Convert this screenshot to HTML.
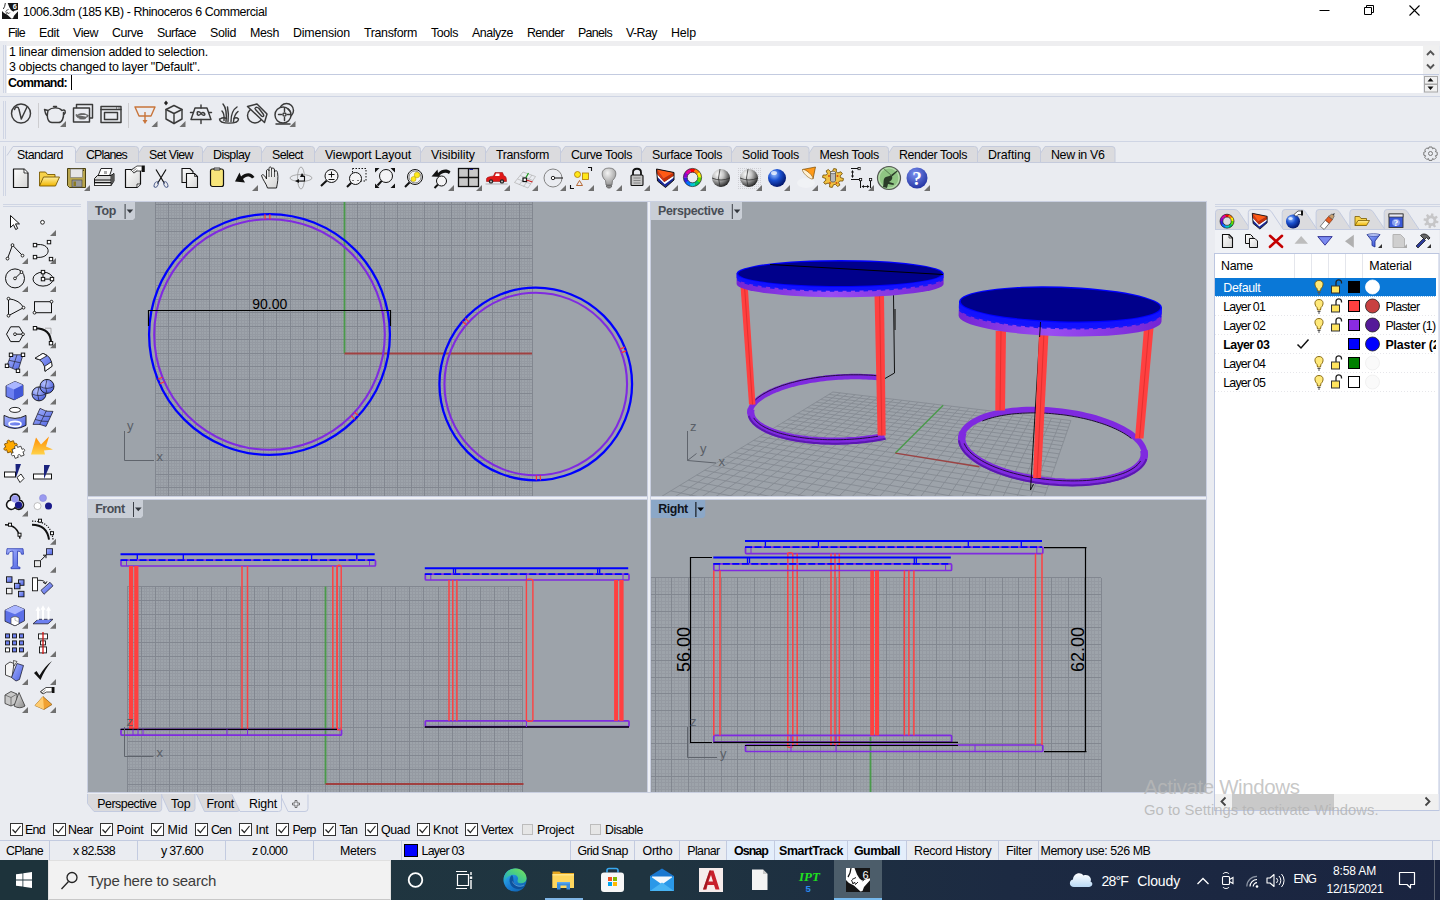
<!DOCTYPE html>
<html><head><meta charset="utf-8"><title>Rhinoceros 6</title>
<style>
*{box-sizing:border-box;margin:0;padding:0}
html,body{width:1440px;height:900px;overflow:hidden;background:#eaecf1;font-family:"Liberation Sans",sans-serif;font-size:12px;color:#000}
.a{position:absolute}
.t{position:absolute;white-space:nowrap;line-height:1}
svg{position:absolute;overflow:visible}
#title{left:0;top:0;width:1440px;height:22px;background:#fff}
#menu{left:0;top:22px;width:1440px;height:19px;background:#fff}
.mi{top:27px;font-size:12.3px}
</style></head><body>
<div class="a" id="title"></div><div class="a" id="menu"></div>
<svg style="left:2px;top:3px" width="16" height="16" viewBox="0 0 24 24"><rect x="0" y="0" width="24" height="24" fill="#161616"/><path d="M0 0H8.500L11 6.500L13.500 10.500L16 12.500L18.500 11.500L24 10.300V12.300L18 19L16.500 23L14.500 23.500L8 17.500L3 15L0 12Z" fill="#fff"/><path d="M5 0Q4.500 5.500 2 9" stroke="#161616" stroke-width="1.300" fill="none"/><path d="M6 11.500L10 9.500M5.500 12L7 16L8.500 14L9.500 16.500L12 14M16.500 13L18.500 11.500" stroke="#222" stroke-width="1" fill="none"/><text x="19" y="9.500" font-size="11" font-weight="bold" fill="#fff" text-anchor="middle" font-family="Liberation Sans,sans-serif">6</text></svg>
<span class="t" style="left:23.00px;top:5.50px;font-size:12.40px;letter-spacing:-0.400px;">1006.3dm (185 KB) - Rhinoceros 6 Commercial</span>
<svg style="left:1300px;top:0" width="140" height="22" viewBox="0 0 140 22">
<path d="M19.500 10.500h10" stroke="#000" stroke-width="1"/>
<path d="M64.500 7.500h7v7h-7z M66.500 7.500v-2h7v7h-2" stroke="#000" stroke-width="1" fill="none"/>
<path d="M109.500 5.500l10 10M119.500 5.500l-10 10" stroke="#000" stroke-width="1.100"/>
</svg>
<span class="t" style="left:8.00px;top:26.50px;font-size:12.40px;letter-spacing:-0.745px;">File</span>
<span class="t" style="left:39.00px;top:26.50px;font-size:12.40px;letter-spacing:-0.342px;">Edit</span>
<span class="t" style="left:73.00px;top:26.50px;font-size:12.40px;letter-spacing:-0.414px;">View</span>
<span class="t" style="left:112.00px;top:26.50px;font-size:12.40px;letter-spacing:-0.416px;">Curve</span>
<span class="t" style="left:157.00px;top:26.50px;font-size:12.40px;letter-spacing:-0.534px;">Surface</span>
<span class="t" style="left:210.00px;top:26.50px;font-size:12.40px;letter-spacing:-0.315px;">Solid</span>
<span class="t" style="left:250.00px;top:26.50px;font-size:12.40px;letter-spacing:-0.331px;">Mesh</span>
<span class="t" style="left:293.00px;top:26.50px;font-size:12.40px;letter-spacing:-0.176px;">Dimension</span>
<span class="t" style="left:364.00px;top:26.50px;font-size:12.40px;letter-spacing:-0.338px;">Transform</span>
<span class="t" style="left:431.00px;top:26.50px;font-size:12.40px;letter-spacing:-0.390px;">Tools</span>
<span class="t" style="left:472.00px;top:26.50px;font-size:12.40px;letter-spacing:-0.445px;">Analyze</span>
<span class="t" style="left:527.00px;top:26.50px;font-size:12.40px;letter-spacing:-0.612px;">Render</span>
<span class="t" style="left:578.00px;top:26.50px;font-size:12.40px;letter-spacing:-0.653px;">Panels</span>
<span class="t" style="left:626.00px;top:26.50px;font-size:12.40px;letter-spacing:-0.554px;">V-Ray</span>
<span class="t" style="left:671.00px;top:26.50px;font-size:12.40px;letter-spacing:-0.126px;">Help</span>
<div class="a" style="left:3px;top:45px;width:1px;height:48px;background:#cfd5e4"></div><div class="a" style="left:5px;top:45px;width:1px;height:48px;background:#cfd5e4"></div>
<div class="a" style="left:7px;top:41px;width:1433px;height:5px;background:#eeeef0"></div><div class="a" style="left:7px;top:45.500px;width:1416px;height:28.500px;background:#fff"></div>
<div class="a" style="left:7px;top:74px;width:1432px;height:1px;background:#c3cbe0"></div>
<div class="a" style="left:7px;top:75px;width:1416px;height:18px;background:#fff"></div>
<span class="t" style="left:9.00px;top:45.50px;font-size:12.40px;letter-spacing:-0.242px;">1 linear dimension added to selection.</span>
<span class="t" style="left:9.00px;top:60.50px;font-size:12.40px;letter-spacing:-0.236px;">3 objects changed to layer &quot;Default&quot;.</span>
<span class="t" style="left:8.00px;top:76.50px;font-size:12.40px;letter-spacing:-0.720px;font-weight:bold;">Command:</span>
<div class="a" style="left:71px;top:75px;width:1px;height:15px;background:#000"></div>
<svg style="left:1423px;top:45px" width="17" height="48" viewBox="0 0 17 48">
<rect x="0" y="0.500" width="16" height="28.500" fill="#f0f0f0"/>
<path d="M4 10l3.500-3.700 3.500 3.700M4 19.500l3.500 3.700 3.500-3.700" stroke="#555" stroke-width="1.900" fill="none"/>
<rect x="1.500" y="31.500" width="13" height="7.500" fill="#f0f0f0" stroke="#a8a8a8"/><rect x="1.500" y="39.500" width="13" height="7.500" fill="#f0f0f0" stroke="#a8a8a8"/>
<path d="M4.500 36.500l3-3.500 3 3.500zM4.500 41.500l3 3.500 3-3.500z" fill="#111"/>
</svg>
<div class="a" style="left:0;top:96px;width:1440px;height:1px;background:#cfd5e4"></div>
<div class="a" style="left:0;top:141px;width:1440px;height:1px;background:#cfd5e4"></div>
<div class="a" style="left:3px;top:101px;width:1px;height:38px;background:#cfd5e4"></div>
<div class="a" style="left:3px;top:146px;width:1px;height:50px;background:#cfd5e4"></div>
<div class="a" style="left:5px;top:101px;width:1px;height:38px;background:#cfd5e4"></div>
<div class="a" style="left:5px;top:146px;width:1px;height:50px;background:#cfd5e4"></div>
<div class="a" style="left:38px;top:103px;width:1px;height:25px;background:#cdcdd0"></div>
<div class="a" style="left:128px;top:103px;width:1px;height:25px;background:#cdcdd0"></div>
<svg style="left:0;top:0" width="1440" height="200" viewBox="0 0 1440 200"><path d="M7 162.500H1440" stroke="#c5cbdc" fill="none"/><path d="M1034.5 162.500L1045.0 146.500H1112.0Q1115.0 146.500 1115.0 149.500V162.500Z" fill="#dbdbde" stroke="#c5cbdc"/><path d="M971.5 162.500L982.0 146.500H1037.5Q1040.5 146.500 1040.5 149.500V162.500Z" fill="#dbdbde" stroke="#c5cbdc"/><path d="M882.5 162.500L893.0 146.500H974.5Q977.5 146.500 977.5 149.500V162.500Z" fill="#dbdbde" stroke="#c5cbdc"/><path d="M803.0 162.500L813.5 146.500H885.5Q888.5 146.500 888.5 149.500V162.500Z" fill="#dbdbde" stroke="#c5cbdc"/><path d="M725.5 162.500L736.0 146.500H806.0Q809.0 146.500 809.0 149.500V162.500Z" fill="#dbdbde" stroke="#c5cbdc"/><path d="M635.5 162.500L646.0 146.500H728.5Q731.5 146.500 731.5 149.500V162.500Z" fill="#dbdbde" stroke="#c5cbdc"/><path d="M554.5 162.500L565.0 146.500H638.5Q641.5 146.500 641.5 149.500V162.500Z" fill="#dbdbde" stroke="#c5cbdc"/><path d="M479.5 162.500L490.0 146.500H557.5Q560.5 146.500 560.5 149.500V162.500Z" fill="#dbdbde" stroke="#c5cbdc"/><path d="M414.5 162.500L425.0 146.500H482.5Q485.5 146.500 485.5 149.500V162.500Z" fill="#dbdbde" stroke="#c5cbdc"/><path d="M308.5 162.500L319.0 146.500H417.5Q420.5 146.500 420.5 149.500V162.500Z" fill="#dbdbde" stroke="#c5cbdc"/><path d="M255.5 162.500L266.0 146.500H311.5Q314.5 146.500 314.5 149.500V162.500Z" fill="#dbdbde" stroke="#c5cbdc"/><path d="M196.5 162.500L207.0 146.500H258.5Q261.5 146.500 261.5 149.500V162.500Z" fill="#dbdbde" stroke="#c5cbdc"/><path d="M132.5 162.500L143.0 146.500H199.5Q202.5 146.500 202.5 149.500V162.500Z" fill="#dbdbde" stroke="#c5cbdc"/><path d="M69.5 162.500L80.0 146.500H135.5Q138.5 146.500 138.5 149.500V162.500Z" fill="#dbdbde" stroke="#c5cbdc"/><path d="M7 162.500V155.500L13 146.500H72.500Q75.500 146.500 75.500 149.500V163.500H7Z" fill="#eaecf1" stroke="none"/><path d="M7 155.500L13 146.500H72.500Q75.500 146.500 75.500 149.500V162.500" fill="none" stroke="#c5cbdc"/><g transform="translate(1430.500 153.500)" fill="none" stroke="#777" stroke-width="1"><circle r="2"/><path d="M-1.500 -6.500h3l.5 1.800 1.700 -.9 2.100 2.100 -.9 1.700 1.800 .5v3l-1.800 .5 .9 1.700 -2.100 2.100 -1.700 -.9 -.5 1.800h-3l-.5 -1.800 -1.700 .9 -2.100 -2.100 .9 -1.700 -1.800 -.5v-3l1.800 -.5 -.9 -1.700 2.100 -2.100 1.700 .9z"/></g></svg>
<span class="t" style="left:17.00px;top:148.50px;font-size:12.40px;letter-spacing:-0.541px;">Standard</span>
<span class="t" style="left:86.00px;top:148.50px;font-size:12.40px;letter-spacing:-0.839px;">CPlanes</span>
<span class="t" style="left:149.00px;top:148.50px;font-size:12.40px;letter-spacing:-0.589px;">Set View</span>
<span class="t" style="left:213.00px;top:148.50px;font-size:12.40px;letter-spacing:-0.523px;">Display</span>
<span class="t" style="left:272.00px;top:148.50px;font-size:12.40px;letter-spacing:-0.577px;">Select</span>
<span class="t" style="left:325.00px;top:148.50px;font-size:12.40px;letter-spacing:-0.180px;">Viewport Layout</span>
<span class="t" style="left:431.00px;top:148.50px;font-size:12.40px;letter-spacing:-0.056px;">Visibility</span>
<span class="t" style="left:496.00px;top:148.50px;font-size:12.40px;letter-spacing:-0.338px;">Transform</span>
<span class="t" style="left:571.00px;top:148.50px;font-size:12.40px;letter-spacing:-0.386px;">Curve Tools</span>
<span class="t" style="left:652.00px;top:148.50px;font-size:12.40px;letter-spacing:-0.377px;">Surface Tools</span>
<span class="t" style="left:742.00px;top:148.50px;font-size:12.40px;letter-spacing:-0.249px;">Solid Tools</span>
<span class="t" style="left:819.50px;top:148.50px;font-size:12.40px;letter-spacing:-0.299px;">Mesh Tools</span>
<span class="t" style="left:899.00px;top:148.50px;font-size:12.40px;letter-spacing:-0.403px;">Render Tools</span>
<span class="t" style="left:988.00px;top:148.50px;font-size:12.40px;letter-spacing:-0.115px;">Drafting</span>
<span class="t" style="left:1051.00px;top:148.50px;font-size:12.40px;letter-spacing:-0.335px;">New in V6</span>
<svg style="left:0;top:0" width="1440" height="200" viewBox="0 0 1440 200"><defs>
<linearGradient id="dg" x1="0" y1="0" x2="1" y2="1"><stop offset="0" stop-color="#ffffff"/><stop offset="1" stop-color="#d4d4d4"/></linearGradient>
<linearGradient id="fy" x1="0" y1="0" x2="0" y2="1"><stop offset="0" stop-color="#fff0a0"/><stop offset="1" stop-color="#f0b400"/></linearGradient>
<radialGradient id="sg" cx=".35" cy=".3" r=".75"><stop offset="0" stop-color="#ffffff"/><stop offset=".4" stop-color="#c4c4c4"/><stop offset=".8" stop-color="#555"/><stop offset="1" stop-color="#1a1a1a"/></radialGradient>
<radialGradient id="sb" cx=".35" cy=".3" r=".75"><stop offset="0" stop-color="#9ac0ff"/><stop offset=".45" stop-color="#1a50d0"/><stop offset="1" stop-color="#001060"/></radialGradient>
<radialGradient id="hb" cx=".4" cy=".3" r=".8"><stop offset="0" stop-color="#7a90f0"/><stop offset="1" stop-color="#1a2a9a"/></radialGradient>
<radialGradient id="bg_" cx=".4" cy=".3" r=".8"><stop offset="0" stop-color="#f4f4f4"/><stop offset="1" stop-color="#8c8c8c"/></radialGradient>
<pattern id="dots" patternUnits="userSpaceOnUse" width="2" height="2"><rect width="1" height="1" fill="#cfcfd4"/></pattern>
</defs><g transform="translate(21 113.5)"><circle r="9.500" stroke="#3a3a3a" stroke-width="1.450" fill="none" stroke-linejoin="round" stroke-linecap="round" stroke-width="1.700"/><path d="M-6.500 -4C-5.500 -7.500 -2.500 -7 -2 -4L0.300 5.500L6 -6.500" stroke="#3a3a3a" stroke-width="1.450" fill="none" stroke-linejoin="round" stroke-linecap="round" stroke-width="1.700"/><path d="M-1.500 -7h3" stroke="#eaecf1" stroke-width="1" fill="none"/></g><g transform="translate(55 114)"><path d="M-7 -3.500C-9 5 -6 8.500 -3 8.500H3.500C7 8.500 9 4 8.500 -1.500M-7 -3.500C-3 -7 4 -7 7 -3.500C10 -5.500 11.500 -2 9 0.500M-7 -3.500L-10.500 -4.500C-10 -1 -9 1 -7.500 2.500M-1.500 -7.500h3" stroke="#3a3a3a" stroke-width="1.450" fill="none" stroke-linejoin="round" stroke-linecap="round"/></g><path d="M66 121v6h-6z" fill="#707070"/><g transform="translate(83 113.5)"><path d="M-6.500 -6V-9H9.500V4.500H6.500" stroke="#3a3a3a" stroke-width="1.450" fill="none" stroke-linejoin="round" stroke-linecap="round"/><rect x="-9.500" y="-5.500" width="16" height="14" stroke="#3a3a3a" stroke-width="1.450" fill="none" stroke-linejoin="round" stroke-linecap="round"/><path d="M-5.500 1.500C-5 5 -3.500 5.500 -2.500 5.500H1C3 5.500 4 3.500 4 1.500C5.500 1 6 2.500 4.500 3.500M-5.500 1.500L-7 1C-7 2.500 -6 3.500 -5.500 4ZM-5.500 1.500C-3 -0.500 2 -0.500 4 1.500" fill="#666" stroke="#666" stroke-width=".8"/></g><g transform="translate(111 114)"><rect x="-10" y="-7.500" width="20" height="16" stroke="#3a3a3a" stroke-width="1.450" fill="none" stroke-linejoin="round" stroke-linecap="round"/><path d="M-10 -4.500H10" stroke="#3a3a3a" stroke-width="1.450" fill="none" stroke-linejoin="round" stroke-linecap="round"/><rect x="-6.500" y="-1.500" width="13" height="7" stroke="#3a3a3a" stroke-width="1.450" fill="none" stroke-linejoin="round" stroke-linecap="round" stroke-width="1.100"/><path d="M5 -6h1M7.500 -6h1" stroke="#333" stroke-width="1"/></g><g transform="translate(145 114.5)"><path d="M-10 -7.500H10L6 1.500H-6Z" stroke="#c8743a" stroke-width="1.400" fill="none" stroke-linejoin="round"/><path d="M0 -2.500V6.500" stroke="#c8743a" stroke-width="1.400" fill="none" stroke-linejoin="round"/><path d="M-2.500 5.500H2.500L0 9.500Z" fill="#c8743a"/></g><path d="M157.5 121v6h-6z" fill="#707070"/><g transform="translate(174 114.5)"><path d="M-8 -5L0 -9L8 -5V4.500L0 9L-8 4.500Z" stroke="#3a3a3a" stroke-width="1.450" fill="none" stroke-linejoin="round" stroke-linecap="round"/><path d="M-8 -5L0 -1L8 -5M0 -1V9" stroke="#3a3a3a" stroke-width="1.450" fill="none" stroke-linejoin="round" stroke-linecap="round"/><path d="M-10 -11.500l2-2.500 2 2.500-2 2.500z" fill="#222"/></g><path d="M185.5 121v6h-6z" fill="#707070"/><g transform="translate(201 114.5)"><path d="M-6 -6.500H6L10 5H-10Z" stroke="#3a3a3a" stroke-width="1.450" fill="none" stroke-linejoin="round" stroke-linecap="round"/><path d="M0 -9.500V-6.500M0 5V9M-10.500 -2H-8M8 -2H10.500" stroke="#3a3a3a" stroke-width="1.450" fill="none" stroke-linejoin="round" stroke-linecap="round"/><path d="M-3.500 -1C-5 -3 -1.500 -3.500 0 -1C1.500 1.500 5 1 3.500 -1C2 -3 0 -1 0 -1C-1.500 1.500 -4.500 1 -3.500 -1Z" stroke="#3a3a3a" stroke-width="1.450" fill="none" stroke-linejoin="round" stroke-linecap="round" stroke-width="1"/></g><g transform="translate(229 114.5)"><path d="M-9.500 4.500C-9.500 10 9.500 10 9.500 4.500M-9 4.500C-6 2.500 -4 3 -2.500 4M5 4C6.500 3 8 3 9.500 4.500" stroke="#3a3a3a" stroke-width="1.450" fill="none" stroke-linejoin="round" stroke-linecap="round" stroke-width="1.100"/><path d="M-3 7C-2 -2 -3 -7 -6 -10.500M-1 7C0 0 -1 -5 -1.500 -7.500M2 7C2 0 4 -5 8 -7.500M4.500 7C5 2 6.500 -1 9 -3M-5 6C-4.500 1 -5.500 -2 -7 -3.500" stroke="#3a3a3a" stroke-width="1.450" fill="none" stroke-linejoin="round" stroke-linecap="round" stroke-width="1.100"/></g><g transform="translate(257 113.5)"><circle cx="-2" cy="2" r="7.500" stroke="#3a3a3a" stroke-width="1.450" fill="none" stroke-linejoin="round" stroke-linecap="round" stroke-width="1.100"/><path d="M-9.500 -7L0 -9.500L10 0.500L7.500 9Z" fill="#eaecf1" stroke="#3a3a3a" stroke-width="1.450" fill="none" stroke-linejoin="round" stroke-linecap="round"/><path d="M-2 -5C-1 -7 1 -6 2 -5L6.500 1C7.500 3 5.500 3.500 4.500 2.500L-1.500 -4" stroke="#3a3a3a" stroke-width="1.450" fill="none" stroke-linejoin="round" stroke-linecap="round" stroke-width="1"/></g><g transform="translate(284 114)"><circle cx="2.500" cy="-3.500" r="7" stroke="#3a3a3a" stroke-width="1.450" fill="none" stroke-linejoin="round" stroke-linecap="round" stroke-width=".9" stroke="#666"/><circle cx="-1" cy="1" r="8" fill="#eaecf1" stroke="#3a3a3a" stroke-width="1.450" fill="none" stroke-linejoin="round" stroke-linecap="round" stroke-width="1.100"/><circle cx="0.500" cy="0.500" r="1.600" stroke="#3a3a3a" stroke-width="1.450" fill="none" stroke-linejoin="round" stroke-linecap="round"/><path d="M0.500 -5.500V-2.500M0.500 3.500V6.500M-5.500 0.500H-2.500M3.500 0.500H6.500M-8 10H6" stroke="#3a3a3a" stroke-width="1.450" fill="none" stroke-linejoin="round" stroke-linecap="round" stroke-width="1.100"/><path d="M4 -5l2 2" stroke="#3a3a3a" stroke-width="1.450" fill="none" stroke-linejoin="round" stroke-linecap="round" stroke-width="1"/></g><path d="M295.5 121v6h-6z" fill="#707070"/><g transform="translate(20.5 178)"><path d="M-7 -9H3.500L7.500 -5V9.500H-7Z" fill="url(#dg)" stroke="#111" stroke-width="1.200" stroke-linejoin="round"/><path d="M3.500 -9V-5H7.500" fill="#fff" stroke="#111" stroke-width=".8"/></g><g transform="translate(49 178)"><path d="M-9.500 8V-6H-3.500L-1.500 -3.500H6V-1" fill="#f7d24a" stroke="#7a5a00" stroke-width=".9"/><path d="M-9.500 8L-5.500 -1H10.500L6.500 8Z" fill="url(#fy)" stroke="#7a5a00" stroke-width=".9" stroke-linejoin="round"/></g><g transform="translate(76.5 178)"><path d="M-9 -9.500H9V9.500H-7L-9 7.500Z" fill="#b9a64e" stroke="#4a4010" stroke-width="1"/><rect x="-6" y="-9" width="12" height="8.500" fill="#e6e6e6" stroke="#777" stroke-width=".6"/><rect x="-4.500" y="2" width="10" height="7" fill="#9a9a9a" stroke="#444" stroke-width=".6"/><rect x="-3" y="3.500" width="2.500" height="4.500" fill="#8a7a20"/><rect x="6.500" y="-8.500" width="1" height="1.500" fill="#4a4010"/></g><path d="M90 185v6h-6z" fill="#707070"/><g transform="translate(104 178)"><path d="M-6 -2L-3 -9.500H8L5.500 -2Z" fill="#fff" stroke="#111" stroke-width=".9"/><rect x="0" y="-7" width="3" height="3" fill="#aaa"/><path d="M-9.500 0.500L-6.500 -2.500H7L10 -4.500V3L7 7.500H-9.500Z" fill="#d8d8d8" stroke="#111" stroke-width="1"/><path d="M7 -2.500V7.500M10 -4.500L7 -2.500" stroke="#111" stroke-width=".8" fill="none"/><path d="M7 -2L10 -4.500V3L7 7.500Z" fill="#555"/><path d="M-9.500 2H7M-9.500 4.500H7" stroke="#111" stroke-width="1.100"/><rect x="-9.500" y="5" width="16.500" height="2.500" fill="#fff" stroke="#111" stroke-width=".7"/></g><g transform="translate(134 178)"><path d="M-8.500 -8.500H6.500V6L3 9.500H-8.500Z" fill="url(#dg)" stroke="#111" stroke-width="1.200" stroke-linejoin="round"/><path d="M3 9.500V6H6.500" fill="#fff" stroke="#111" stroke-width=".8"/><path d="M-3 -8L3 -12H8V-7H3L0 -5Z" fill="#fff" stroke="#222" stroke-width=".8"/><rect x="8" y="-12.500" width="2.800" height="6.500" fill="#111"/><path d="M-3.500 -7l4.500-3.500M-2 -6l4.500-3.500M-.5 -5l4-3" stroke="#555" stroke-width=".7"/></g><g transform="translate(161 178)"><path d="M-5 -8.500L3.500 5.500M5 -8.500L-3.500 5.500" stroke="#111" stroke-width="1.200"/><ellipse cx="-4.800" cy="6.500" rx="1.800" ry="3" transform="rotate(28 -4.800 6.500)" fill="none" stroke="#4a5a8a" stroke-width=".9"/><ellipse cx="4.800" cy="6.500" rx="1.800" ry="3" transform="rotate(-28 4.800 6.500)" fill="none" stroke="#4a5a8a" stroke-width=".9"/></g><g transform="translate(189.5 178)"><path d="M-7.500 -9.500H0.500L3.500 -6.500V4.500H-7.500Z" fill="url(#dg)" stroke="#111" stroke-width="1.100"/><path d="M-3 -4.500H5L8 -1.500V9.500H-3Z" fill="url(#dg)" stroke="#111" stroke-width="1.100"/><path d="M5 -4.500V-1.500H8" fill="none" stroke="#111" stroke-width=".7"/></g><g transform="translate(217 177.5)"><rect x="-6.500" y="-8.500" width="13" height="17.500" rx="2" fill="#f7e57a" stroke="#111" stroke-width="1.200"/><path d="M-3 -9.500H3V-7.500H-3Z" fill="#ddd" stroke="#111" stroke-width=".8"/></g><g transform="translate(245 178)"><path d="M-10 3.500L-5.500 -5.500L-4 -1.500C1 -6 6.500 -6 9.500 -1L7 0.500C4 -2.500 1 -2 -2 1L0 4.500Z" fill="#111"/></g><path d="M258 185v6h-6z" fill="#707070"/><g transform="translate(271 178)"><path d="M-3.500 10C-4.500 6 -8.500 1.500 -9.500 -2.500C-8.500 -4.500 -6 -2.500 -4.500 1V-7C-4.500 -9 -2 -9 -2 -7V-9.500C-2 -11.500 0.500 -11.500 0.500 -9.500V-8.500C0.500 -10.500 3.500 -10.500 3.500 -8V-6C4 -8 6.500 -7.500 6.500 -5.500C7.500 0 6.500 5 5.500 10Z" fill="url(#dg)" stroke="#111" stroke-width=".9" stroke-linejoin="round"/><path d="M-2 -7V-1M0.500 -8.500V-1M3.500 -7V-1" stroke="#111" stroke-width=".7"/></g><g transform="translate(301 178)"><ellipse rx="11" ry="3.500" fill="none" stroke="#999" stroke-width=".8"/><ellipse rx="3.500" ry="11" fill="none" stroke="#999" stroke-width=".8"/><path d="M-6 3L-2 1V5Z M1 -5L3.500 -1H-1Z" fill="#111"/><path d="M-3 3H3.500V-2" stroke="#111" stroke-width="1.100" fill="none"/></g><path d="M326.8 180.5L321 186" stroke="#111" stroke-width="2"/><circle cx="331.5" cy="176" r="6.5" fill="#f4f4f6" stroke="#111" stroke-width="1"/><path d="M328.500 174.500h6M331.500 171.500v6M328.500 179.500h6" stroke="#111" stroke-width="1"/><rect x="352.500" y="168.500" width="13.500" height="12.500" fill="none" stroke="#111" stroke-width="1" stroke-dasharray="1.500 1.500"/><path d="M351.3 182.7L347 187" stroke="#111" stroke-width="2"/><circle cx="355.5" cy="178.5" r="6" fill="#f4f4f6" stroke="#111" stroke-width="1"/><path d="M352 180.500h2M357 180.500h2" stroke="#555" stroke-width=".8"/><path d="M375 168h4.500l-4.500 4.500zM395 168h-4.500l4.500 4.500zM375 188h4.500l-4.500-4.500zM395 188h-4.500l4.500-4.500z" fill="#111"/><path d="M381.7 180.8L377.5 185.5" stroke="#111" stroke-width="2"/><circle cx="386" cy="176" r="6.5" fill="#f4f4f6" stroke="#111" stroke-width="1"/><path d="M409.7 182.3L405 187" stroke="#111" stroke-width="2"/><circle cx="415" cy="177" r="7.5" fill="#f4f4f6" stroke="#111" stroke-width="1"/><circle cx="415" cy="177" r="6" fill="none" stroke="#555" stroke-width=".7"/><circle cx="417" cy="175" r="2.800" fill="#ffe81a" stroke="#b09a00" stroke-width=".5"/><circle cx="413.500" cy="179" r="2.500" fill="#ffe81a" stroke="#b09a00" stroke-width=".5"/><path d="M431.500 176.500L437.500 169.500L438 173C442 169 447 168.500 450.500 171.500L449 174C446 172 442.500 172.500 439.500 175.500L442 177Z" fill="#111"/><path d="M438.0 184.5L434.5 188" stroke="#111" stroke-width="2"/><circle cx="441.5" cy="181" r="5" fill="#f4f4f6" stroke="#111" stroke-width="1"/><path d="M454 185v6h-6z" fill="#707070"/><rect x="458.500" y="168.500" width="20" height="18" fill="#c9c9c9" stroke="#111" stroke-width="1.300"/><path d="M468.500 168.500V186.500M458.500 177.500H478.500" stroke="#111" stroke-width="1.300"/><rect x="469.500" y="169" width="3.500" height="1" fill="#1a1a9a"/><path d="M482 185v6h-6z" fill="#707070"/><g transform="translate(496.5 178)"><path d="M-10 3.500V1C-10 -1 -6 -1.500 -3 -2L-1.500 -5.500H6L7.500 -2C9.500 -2 10 0 10 3.500Z" fill="#e01818" stroke="#8a0000" stroke-width=".5"/><path d="M-0.500 -4.500H3V-2H-1.500Z" fill="#fff"/><circle cx="-5.500" cy="3.500" r="2.200" fill="#222"/><circle cx="5.500" cy="3.500" r="2.200" fill="#222"/><circle cx="-5.500" cy="3.500" r=".9" fill="#ccc"/><circle cx="5.500" cy="3.500" r=".9" fill="#ccc"/><path d="M-11 6H11" stroke="#999" stroke-width=".7"/></g><path d="M510 185v6h-6z" fill="#707070"/><g transform="translate(525 180)"><path d="M-10.500 2.500L-2 -8L10.500 -3.500L3 8Z M-7.500 -1L6 4M-5 -4.500L8 0.500M-6 5L3 -6M-1.500 6.500L7 -5" fill="none" stroke="#b0b0b0" stroke-width=".7"/><rect x="-2" y="-2" width="3.500" height="3.500" fill="#fff" stroke="#111" stroke-width="1.200"/><path d="M1.500 0L7.500 2" stroke="#d02020" stroke-width="1.200"/><path d="M1 -2.500L3.500 -7" stroke="#20a020" stroke-width="1.200"/></g><path d="M538 185v6h-6z" fill="#707070"/><g transform="translate(553 178)"><circle r="9" fill="none" stroke="#777" stroke-width=".9"/><path d="M0 0H10" stroke="#111" stroke-width="1"/><circle r="1.700" fill="#fff" stroke="#111" stroke-width=".9"/></g><path d="M566 185v6h-6z" fill="#707070"/><circle cx="577.500" cy="174.500" r="3" fill="#ffe81a" stroke="#b07800" stroke-width=".8"/><rect x="582.500" y="173" width="6" height="6.500" fill="#ffe81a" stroke="#b07800" stroke-width=".8"/><path d="M576.500 185.500L579.500 180.500L582.500 185.500Z" fill="none" stroke="#b05a20" stroke-width=".9"/><path d="M570.500 185v3.500h3.500M588 167.500h3.500v3.500" fill="none" stroke="#111" stroke-width="1.100"/><path d="M594 185v6h-6z" fill="#707070"/><g transform="translate(609 178)"><path d="M0 -10C-9 -10 -8 -1 -3.500 2.500L-3 7H3L3.500 2.500C8 -1 9 -10 0 -10Z" fill="url(#bg_)" stroke="#666" stroke-width=".7"/><path d="M-2.500 7.500H2.500V9C1 10.500 -1 10.500 -2.500 9Z" fill="#888" stroke="#444" stroke-width=".6"/></g><path d="M622 185v6h-6z" fill="#707070"/><g transform="translate(637 178)"><path d="M-4 -3V-5.500C-4 -10.500 4 -10.500 4 -5.500V-3" fill="none" stroke="#111" stroke-width="1.800"/><rect x="-6" y="-3" width="12" height="10.500" rx="1" fill="#c4c4c4" stroke="#111" stroke-width="1.100"/><path d="M-3.500 0H3.500M-3.500 2.500H3.500M-3.500 5H3.500" stroke="#777" stroke-width=".8"/></g><path d="M650 185v6h-6z" fill="#707070"/><g transform="translate(665 178) scale(1)"><path d="M-8.500 -9L9 -5.500V2L0.500 9.500L-7.500 3Z" fill="#1a2a9a"/><path d="M-8.100 -4.200L-0.700 4.100L9 -2.500V-0.600L-0.200 6.350L-7.850 -1.200Z" fill="#fff"/><path d="M-8.500 -9L-1.500 0.500L-0.700 4.100L-8.100 -4.200Z" fill="#e03a08"/><path d="M-1.500 0.500L9 -5.500V-2.500L-0.700 4.100Z" fill="#c83000"/><path d="M-8.500 -9L9 -5.500L-1.500 0.500Z" fill="#ff5a14"/><path d="M-8.500 -9L9 -5.500V2L0.500 9.500L-7.500 3Z" fill="none" stroke="#111" stroke-width="1"/></g><path d="M678 185v6h-6z" fill="#707070"/><path d="M690.14 170.70A7.2 7.2 0 0 1 694.86 170.70" stroke="#ff0000" stroke-width="3.8" fill="none"/><path d="M694.59 170.61A7.2 7.2 0 0 1 698.41 173.39" stroke="#ff8000" stroke-width="3.8" fill="none"/><path d="M698.24 173.15A7.2 7.2 0 0 1 699.70 177.64" stroke="#ffee00" stroke-width="3.8" fill="none"/><path d="M699.70 177.36A7.2 7.2 0 0 1 698.24 181.85" stroke="#60e000" stroke-width="3.8" fill="none"/><path d="M698.41 181.61A7.2 7.2 0 0 1 694.59 184.39" stroke="#00c060" stroke-width="3.8" fill="none"/><path d="M694.86 184.30A7.2 7.2 0 0 1 690.14 184.30" stroke="#00c8d0" stroke-width="3.8" fill="none"/><path d="M690.41 184.39A7.2 7.2 0 0 1 686.59 181.61" stroke="#0070ff" stroke-width="3.8" fill="none"/><path d="M686.76 181.85A7.2 7.2 0 0 1 685.30 177.36" stroke="#3020e0" stroke-width="3.8" fill="none"/><path d="M685.30 177.64A7.2 7.2 0 0 1 686.76 173.15" stroke="#9000d0" stroke-width="3.8" fill="none"/><path d="M686.59 173.39A7.2 7.2 0 0 1 690.41 170.61" stroke="#e000a0" stroke-width="3.8" fill="none"/><circle cx="692.5" cy="177.5" r="9.1" fill="none" stroke="#222" stroke-width=".7"/><circle cx="692.5" cy="177.5" r="5.3" fill="none" stroke="#222" stroke-width=".7"/><path d="M706 185v6h-6z" fill="#707070"/><circle cx="721" cy="178" r="9" fill="url(#sg)"/><path d="M712 178Q721 182 730 178M720 169Q717 178 720 187" stroke="#333" stroke-width=".8" fill="none"/><rect x="738" y="167" width="23" height="22" fill="url(#dots)"/><circle cx="749" cy="178" r="9" fill="url(#sg)"/><path d="M740 178Q749 182 758 178M748 169Q745 178 748 187" stroke="#333" stroke-width=".8" fill="none"/><path d="M762 185v6h-6z" fill="#707070"/><circle cx="777" cy="178" r="9" fill="url(#sb)"/><ellipse cx="774" cy="173" rx="3" ry="2" fill="#fff" opacity=".7"/><path d="M790 185v6h-6z" fill="#707070"/><ellipse cx="806" cy="183" rx="9" ry="5" fill="#fff" opacity=".3"/><path d="M802.500 169.500L815.500 167L813 179Z" fill="#ff9a1a" stroke="#7a4a00" stroke-width=".7"/><ellipse cx="807.700" cy="174.200" rx="2" ry="6.800" transform="rotate(-48 807.700 174.200)" fill="#fff0d0" stroke="#7a4a00" stroke-width=".5"/><path d="M818 185v6h-6z" fill="#707070"/><path d="M843.5 178.6 L842.9 181.0 L839.7 181.0 L838.6 182.4 L839.9 185.1 L837.7 186.5 L835.4 184.4 L833.5 184.7 L832.3 187.4 L829.6 187.0 L829.7 184.1 L828.1 183.1 L825.1 184.2 L823.6 182.2 L825.9 180.2 L825.5 178.4 L822.5 177.4 L823.1 175.0 L826.3 175.0 L827.4 173.6 L826.1 170.9 L828.3 169.5 L830.6 171.6 L832.5 171.3 L833.7 168.6 L836.4 169.0 L836.3 171.9 L837.9 172.9 L840.9 171.8 L842.4 173.8 L840.1 175.8 L840.5 177.6 Z" fill="#f2c040" stroke="#6a4a00" stroke-width=".8"/><circle cx="829" cy="176" r="1" fill="#d05010"/><circle cx="837.500" cy="176" r="1" fill="#d05010"/><circle cx="830" cy="183" r="1" fill="#d05010"/><circle cx="836.500" cy="183" r="1" fill="#d05010"/><path d="M830.500 172.500V180.500C830.500 182.500 835.500 182.500 835.500 180.500V172.500Z" fill="#b8b8b8" stroke="#444" stroke-width=".7"/><ellipse cx="833" cy="172.500" rx="2.500" ry="1.200" fill="#e8e8e8" stroke="#444" stroke-width=".6"/><path d="M846 185v6h-6z" fill="#707070"/><path d="M851 168.500H858M851 179.500H859M860.500 180.500V188M870.500 180.500V188" stroke="#111" stroke-width="1" fill="none"/><path d="M852.500 171V177M862.500 186.500H868.500" stroke="#111" stroke-width=".9"/><path d="M852.500 170l-1.500 2.500h3zM852.500 178l-1.500-2.500h3zM861.500 186.500l2.500-1.500v3zM869.500 186.500l-2.500-1.500v3z" fill="#111"/><rect x="858" y="167.500" width="2.200" height="2.200" fill="#fff" stroke="#111" stroke-width=".8"/><rect x="859.500" y="178.500" width="2.200" height="2.200" fill="#fff" stroke="#111" stroke-width=".8"/><rect x="869.500" y="178.500" width="2.200" height="2.200" fill="#fff" stroke="#111" stroke-width=".8"/><path d="M874 185v6h-6z" fill="#707070"/><g transform="translate(889 178)"><circle r="11.500" fill="#8fc583" stroke="#555" stroke-width="1.200"/><circle r="10" fill="none" stroke="#b8dcae" stroke-width="1.200"/><path d="M-6 9C-5 5 -6 2 -4.500 0C-3 -2 0 -1 2 -3L8 -7.500L8.500 -6.500L3 -1.500C4 1 2 3 0 4L5 5.500L4.500 7L-1 6L-2 10Z" fill="#2a3a28"/><path d="M-6 -10L3 -2" stroke="#4a6a44" stroke-width=".8"/></g><g transform="translate(917 178)"><circle r="10.500" fill="url(#hb)"/><text x="0" y="6.500" font-size="19" font-weight="bold" text-anchor="middle" fill="#fff" font-family="Liberation Serif,serif">?</text></g><path d="M930 185v6h-6z" fill="#707070"/></svg>
<svg style="left:0;top:0" width="90" height="800" viewBox="0 0 90 800"><defs><linearGradient id="lb" x1="0" y1="0" x2="1" y2="1"><stop offset="0" stop-color="#a9b6ff"/><stop offset="1" stop-color="#4a5fe0"/></linearGradient><linearGradient id="lo" x1="0" y1="0" x2="0" y2="1"><stop offset="0" stop-color="#ff8c00"/><stop offset="1" stop-color="#ffd24a"/></linearGradient><radialGradient id="ls" cx=".35" cy=".3" r=".8"><stop offset="0" stop-color="#b8c4ff"/><stop offset="1" stop-color="#4055d8"/></radialGradient><linearGradient id="lg" x1="0" y1="0" x2="1" y2="1"><stop offset="0" stop-color="#e8e8e8"/><stop offset="1" stop-color="#8a8a8a"/></linearGradient></defs><path d="M3 204.500H81M3 206.500H81" stroke="#cfd5e4"/><path d="M56.0 230.0v6h-6z" fill="#707070"/><path d="M28.0 258.1v6h-6z" fill="#707070"/><path d="M56.0 258.1v6h-6z" fill="#707070"/><path d="M28.0 286.1v6h-6z" fill="#707070"/><path d="M56.0 286.1v6h-6z" fill="#707070"/><path d="M28.0 314.2v6h-6z" fill="#707070"/><path d="M56.0 314.2v6h-6z" fill="#707070"/><path d="M28.0 342.2v6h-6z" fill="#707070"/><path d="M56.0 342.2v6h-6z" fill="#707070"/><path d="M28.0 370.3v6h-6z" fill="#707070"/><path d="M56.0 370.3v6h-6z" fill="#707070"/><path d="M28.0 398.4v6h-6z" fill="#707070"/><path d="M56.0 398.4v6h-6z" fill="#707070"/><path d="M28.0 426.4v6h-6z" fill="#707070"/><path d="M56.0 426.4v6h-6z" fill="#707070"/><path d="M28.0 510.6v6h-6z" fill="#707070"/><path d="M56.0 538.7v6h-6z" fill="#707070"/><path d="M56.0 566.7v6h-6z" fill="#707070"/><path d="M28.0 622.8v6h-6z" fill="#707070"/><path d="M56.0 622.8v6h-6z" fill="#707070"/><path d="M28.0 650.9v6h-6z" fill="#707070"/><path d="M56.0 650.9v6h-6z" fill="#707070"/><path d="M28.0 679.0v6h-6z" fill="#707070"/><path d="M56.0 679.0v6h-6z" fill="#707070"/><path d="M28.0 707.0v6h-6z" fill="#707070"/><path d="M56.0 707.0v6h-6z" fill="#707070"/><g transform="translate(15.0 222.0)"><path d="M-4.500 -6.500v12l3-2.800 2.200 4.800 2-1-2.200-4.600h4z" fill="#fff" stroke="#111" stroke-width="1" stroke-linejoin="round"/></g><g transform="translate(43.0 222.0)"><circle cx="-0.5" cy="0.3" r="1.9" fill="#fff" stroke="#111" stroke-width=".9"/></g><g transform="translate(15.0 250.1)"><path d="M-7.500 8.500L-2.500 -5L7.500 5.500" stroke="#111" stroke-width="1" fill="none" stroke-width=".9"/><circle cx="-7.5" cy="8.5" r="1.4" fill="#fff" stroke="#111" stroke-width=".9"/><circle cx="-2.5" cy="-5" r="1.4" fill="#fff" stroke="#111" stroke-width=".9"/><circle cx="7.5" cy="5.5" r="1.4" fill="#fff" stroke="#111" stroke-width=".9"/></g><g transform="translate(43.0 250.1)"><path d="M-8 -5C9 -9 10 10 -8 7" stroke="#111" stroke-width="1" fill="none"/><rect x="-9.7" y="-6.7" width="3.4" height="3.4" fill="#fff" stroke="#111" stroke-width="1"/><rect x="4.3" y="-9.7" width="3.4" height="3.4" fill="#fff" stroke="#111" stroke-width="1"/><rect x="-9.7" y="5.3" width="3.4" height="3.4" fill="#fff" stroke="#111" stroke-width="1"/><rect x="6.3" y="7.3" width="3.4" height="3.4" fill="#fff" stroke="#111" stroke-width="1"/></g><g transform="translate(15.0 278.1)"><circle cx="0" cy="0.300" r="9.500" stroke="#111" stroke-width="1" fill="none" stroke-width=".9"/><path d="M0 0.300L6.500 -6" stroke="#111" stroke-width="1" fill="none"/><circle cx="0" cy="0.3" r="1.4" fill="#fff" stroke="#111" stroke-width=".9"/><circle cx="6.5" cy="-6" r="1.4" fill="#fff" stroke="#111" stroke-width=".9"/></g><g transform="translate(43.0 278.1)"><ellipse cx="0" cy="1" rx="10" ry="7" stroke="#111" stroke-width="1" fill="none" stroke-width=".9"/><path d="M0 -6V1H9" stroke="#111" stroke-width="1" fill="none"/><rect x="-1.7" y="-7.7" width="3.4" height="3.4" fill="#fff" stroke="#111" stroke-width="1"/><rect x="-1.7" y="-0.7" width="3.4" height="3.4" fill="#fff" stroke="#111" stroke-width="1"/><rect x="7.3" y="-0.7" width="3.4" height="3.4" fill="#fff" stroke="#111" stroke-width="1"/></g><g transform="translate(15.0 306.2)"><path d="M-6.500 -7.500V9.500L8.500 1.500" stroke="#111" stroke-width="1" fill="none" stroke-width=".8"/><path d="M-6.500 -7.500Q5 -6 8.500 1.500" stroke="#111" stroke-width="1" fill="none"/><circle cx="-6.5" cy="-7.5" r="1.4" fill="#fff" stroke="#111" stroke-width=".9"/><circle cx="8.5" cy="1.5" r="1.4" fill="#fff" stroke="#111" stroke-width=".9"/><circle cx="-6.5" cy="9.5" r="1.4" fill="#fff" stroke="#111" stroke-width=".9"/></g><g transform="translate(43.0 306.2)"><rect x="-8.500" y="-4.500" width="17" height="11" stroke="#111" stroke-width="1" fill="none"/><circle cx="8.5" cy="-4.5" r="1.4" fill="#fff" stroke="#111" stroke-width=".9"/><circle cx="-8.5" cy="6.5" r="1.4" fill="#fff" stroke="#111" stroke-width=".9"/></g><g transform="translate(15.0 334.2)"><path d="M-8.500 0L-4.300 -7.400H4.300L8.500 0L4.300 7.400H-4.300Z" stroke="#111" stroke-width="1" fill="none" stroke-width=".9"/><path d="M0 0H8.500" stroke="#111" stroke-width="1" fill="none"/><circle cx="0" cy="0" r="1.4" fill="#fff" stroke="#111" stroke-width=".9"/><circle cx="8" cy="0" r="1.4" fill="#fff" stroke="#111" stroke-width=".9"/></g><g transform="translate(43.0 334.2)"><path d="M2 -6H8V0" stroke="#999" stroke-width=".8" fill="none"/><path d="M-8 -6Q8 -6 8 9" stroke="#111" stroke-width="2" fill="none"/><rect x="-9.7" y="-7.7" width="3.4" height="3.4" fill="#fff" stroke="#111" stroke-width="1"/><rect x="6.3" y="7.3" width="3.4" height="3.4" fill="#fff" stroke="#111" stroke-width="1"/></g><g transform="translate(15.0 362.3)"><path d="M-4 -7.500L8 -7.500L3 8.500L-8 3.500Z" fill="url(#lb)" stroke="#223" stroke-width=".8"/><path d="M2 -7.500L-2.500 6M-6 -2L5.500 0.500" stroke="#223" stroke-width=".7" fill="none"/><rect x="-5.7" y="-9.2" width="3.4" height="3.4" fill="#fff" stroke="#111" stroke-width="1"/><rect x="6.3" y="-9.2" width="3.4" height="3.4" fill="#fff" stroke="#111" stroke-width="1"/><rect x="-9.7" y="1.8" width="3.4" height="3.4" fill="#fff" stroke="#111" stroke-width="1"/><rect x="1.3" y="6.8" width="3.4" height="3.4" fill="#fff" stroke="#111" stroke-width="1"/></g><g transform="translate(43.0 362.3)"><path d="M-8 -4L0 -9Q9 -6 9 4L2 9Q2 -2 -8 -4Z" fill="url(#lb)" stroke="#111" stroke-width=".9"/><path d="M-8 -4L0 -9L4 -6.500L-3 -2.500Z" fill="#fff" stroke="#111" stroke-width=".8"/><path d="M2 9L9 4L8.500 -0.500L1.700 4Z" fill="#fff" stroke="#111" stroke-width=".8"/></g><g transform="translate(15.0 390.4)"><path d="M-9 -4.500L0 -9L8 -5.500V5L-1 9.500L-9 6Z" fill="#6d80f0" stroke="#223" stroke-width=".8"/><path d="M-9 -4.500L-1 -1L8 -5.500L0 -9Z" fill="#aab6ff"/><path d="M-1 -1V9.500L8 5V-5.500Z" fill="#4258d8"/></g><g transform="translate(43.0 390.4)"><circle cx="-4" cy="3.500" r="7" fill="url(#ls)" stroke="#111" stroke-width=".9"/><circle cx="4" cy="-4" r="7" fill="url(#ls)" stroke="#111" stroke-width=".9"/><path d="M-3 -4Q4 0 11 -4M4 -11Q1 -4 4 3M-11 3.500Q-4 7 3 3.500M-4 -3.500Q-7 3 -4 10.500" stroke="#223" stroke-width=".7" fill="none"/></g><g transform="translate(15.0 418.4)"><ellipse cx="0" cy="-8.500" rx="5.500" ry="2.500" fill="#fff" stroke="#111" stroke-width=".9"/><path d="M-11 -3Q0 3 11 -3V7Q0 13 -11 7Z" fill="url(#lb)" stroke="#111" stroke-width=".9"/><ellipse cx="0" cy="5.500" rx="6" ry="2.500" fill="none" stroke="#fff" stroke-width="1.700"/></g><g transform="translate(43.0 418.4)"><path d="M-3 -10Q3 -6 10 -7L3 8Q-3 5 -10 6Z" fill="url(#lb)" stroke="#223" stroke-width=".8"/><path d="M3.500 -8L-3.500 6.500M-5.500 -4.500Q1 -1 7.500 -2M-8 1Q-1 3.500 5 3" stroke="#223" stroke-width=".7" fill="none"/></g><g transform="translate(15.0 446.5)"><path d="M-9 -6h3.500c-1.500-3 3.500-3 2.500 0h3.500v3.500c3-1.500 3 3.500 0 2.500v3.500h-3.500c1 3-4 3-2.500 0h-3.500v-3.500c-3 1.500-3-3.500 0-2.500z" fill="#ffaa00" stroke="#7a4a00" stroke-width=".8" transform="rotate(-20)"/><path d="M-2 1h3.500c-1.500-3 3.500-3 2.500 0h3.500v3.500c3-1.500 3 3.500 0 2.500v3.500h-3.500c1-3-4-3-2.500 0h-3.500v-3.500c-3 1.500-3-3.500 0-2.500z" fill="#fff" stroke="#333" stroke-width=".8" transform="rotate(-20 3 5)"/></g><g transform="translate(43.0 446.5)"><path d="M-12 8L-7 -9L-2 -2L6 -10L3 0L10 3L1 4L2 8Z" fill="url(#lo)"/></g><g transform="translate(15.0 474.5)"><rect x="-10.500" y="-2.500" width="11" height="5" fill="#fff" stroke="#111"/><path d="M2 1L6 -2.500L9 2L5 6Z" fill="#fff" stroke="#111" stroke-width=".9" transform="translate(0 2)"/><path d="M0.500 -10.500H6L1 3Z" fill="#1a237e"/></g><g transform="translate(43.0 474.5)"><rect x="-9.500" y="-0.500" width="18" height="5" fill="#fff" stroke="#111"/><path d="M1 -9.500H7L1 4.500Z" fill="#1a237e"/></g><g transform="translate(15.0 502.6)"><circle cx="0" cy="0" r="0" fill="#111"/><circle cx="-3.500" cy="2.500" r="3.600" fill="#fff"/><circle cx="3.500" cy="2.500" r="3.600" fill="#1a1a8a"/><circle cx="0" cy="-3.800" r="3.600" fill="#9a9af0"/><path d="M0 -8.500a4.700 4.700 0 0 1 4.500 6a4.700 4.700 0 1 1 -4.500 7.500a4.700 4.700 0 1 1 -4.500 -7.500a4.700 4.700 0 0 1 4.500 -6z" fill="none" stroke="#111" stroke-width="1.500"/></g><g transform="translate(43.0 502.6)"><circle cx="0" cy="-4.500" r="3.500" fill="#9a9af0" stroke="#8888d8" stroke-width=".6"/><circle cx="-5.500" cy="3.500" r="3.500" fill="#fff" stroke="#999" stroke-width=".6"/><circle cx="5.500" cy="3.500" r="3.500" fill="#1a1a8a"/></g><g transform="translate(15.0 530.7)"><path d="M-10 -6Q3 -6 5 8" stroke="#111" stroke-width="1.500" fill="none"/><rect x="-6.5" y="-7.5" width="3" height="3" fill="#fff" stroke="#111" stroke-width="1"/><rect x="3" y="2.5" width="3" height="3" fill="#fff" stroke="#111" stroke-width="1"/></g><g transform="translate(43.0 530.7)"><path d="M-11 -6Q4 -6 6 9" stroke="#111" stroke-width="2" fill="none"/><path d="M-11 -9.500Q8 -10 10 9" stroke="#111" stroke-width="1.200" stroke-dasharray="1.200 1.300" fill="none"/><rect x="-4.5" y="-11.5" width="3" height="3" fill="#fff" stroke="#111" stroke-width="1"/><rect x="7.5" y="1" width="3" height="3" fill="#fff" stroke="#111" stroke-width="1"/></g><g transform="translate(15.0 558.7)"><path d="M-8 -10H8L8.500 -4.500H6.500C6 -7 5 -7.500 2.500 -7.500V6C2.500 8 3 8.500 5 8.500V10H-4V8.500C-2.500 8.500 -2 8 -2 6V-7.500C-5 -7.500 -6 -7 -6.500 -4.500H-8.500Z" fill="url(#lb)" stroke="#2a3ab0" stroke-width=".8"/></g><g transform="translate(43.0 558.7)"><rect x="-8.500" y="2" width="6" height="6" fill="#e8e8e8" stroke="#111" stroke-width=".9"/><rect x="3.500" y="-10" width="6" height="6" fill="url(#lb)" stroke="#223" stroke-width=".9"/><path d="M-2 1.500L3 -3.500M3 -3.500h-3M3 -3.500v3" stroke="#111" stroke-width="1" fill="none"/></g><g transform="translate(15.0 586.8)"><rect x="-8.5" y="-10" width="5.500" height="5.500" fill="url(#lb)" stroke="#111" stroke-width=".9"/><rect x="-8.5" y="1.5" width="5.500" height="5.500" fill="#f0f0f0" stroke="#111" stroke-width=".9"/><rect x="3.5" y="-7" width="5.500" height="5.500" fill="url(#lb)" stroke="#111" stroke-width=".9"/><rect x="-0.5" y="-3.5" width="5.500" height="5.500" fill="url(#lb)" stroke="#111" stroke-width=".9"/><rect x="3.5" y="4.5" width="5.500" height="5.500" fill="url(#lb)" stroke="#111" stroke-width=".9"/></g><g transform="translate(43.0 586.8)"><rect x="-10.500" y="-9" width="5" height="13" fill="#fff" stroke="#111" stroke-width=".9"/><path d="M-2 3.500L7 -4.500L10 -1L1 7.500Z" fill="url(#lb)" stroke="#223" stroke-width=".8"/><path d="M-5 -6.500Q2 -7 2.500 -3M2.500 -3l-2.500-1.500M2.500 -3l1.500-2.500" stroke="#111" stroke-width=".9" fill="none"/></g><g transform="translate(15.0 614.8)"><path d="M-10 -4.500L0 -9.500L9.500 -5.500V6L0 11L-10 6.500Z" fill="#5c70e8" stroke="#223" stroke-width=".8"/><path d="M-10 -4.500L0 -0.500L9.500 -5.500L0 -9.500Z" fill="#aab6ff"/><path d="M-4 3L0 1.500L4 3V9L0 11L-4 9Z" fill="#fff" stroke="#333" stroke-width=".6"/><path d="M0 1.500V5.500L4 7" stroke="#999" stroke-width=".6" fill="none"/></g><g transform="translate(43.0 614.8)"><path d="M-10 9L-5 4.500H10L5 9Z" fill="#6d80f0" stroke="#223" stroke-width=".8"/><path d="M-5 5V-5M0 5V-6M5.500 5V-5" stroke="#fff" stroke-width="2"/><path d="M-7.500 -4L-5 -8.500L-2.500 -4ZM-2.500 -5L0 -9.500L2.500 -5ZM3 -4L5.500 -8.500L8 -4Z" fill="#fff"/></g><g transform="translate(15.0 642.9)"><rect x="-9.5" y="-9" width="4" height="4" fill="#6d80f0" stroke="#111" stroke-width=".9"/><rect x="-9.5" y="-2" width="4" height="4" fill="#6d80f0" stroke="#111" stroke-width=".9"/><rect x="-9.5" y="5" width="4" height="4" fill="#fff" stroke="#111" stroke-width=".9"/><rect x="-2.5" y="-9" width="4" height="4" fill="#6d80f0" stroke="#111" stroke-width=".9"/><rect x="-2.5" y="-2" width="4" height="4" fill="#6d80f0" stroke="#111" stroke-width=".9"/><rect x="-2.5" y="5" width="4" height="4" fill="#6d80f0" stroke="#111" stroke-width=".9"/><rect x="4.5" y="-9" width="4" height="4" fill="#6d80f0" stroke="#111" stroke-width=".9"/><rect x="4.5" y="-2" width="4" height="4" fill="#6d80f0" stroke="#111" stroke-width=".9"/><rect x="4.5" y="5" width="4" height="4" fill="#6d80f0" stroke="#111" stroke-width=".9"/></g><g transform="translate(43.0 642.9)"><rect x="-4.500" y="-9" width="9" height="5" fill="#fff" stroke="#111" stroke-width=".9"/><rect x="-2.500" y="-2" width="5" height="4" fill="#fff" stroke="#111" stroke-width=".9"/><rect x="-3.500" y="4" width="7" height="6" fill="#fff" stroke="#111" stroke-width=".9"/><path d="M0 -11V11" stroke="#d01010" stroke-width="1.300"/></g><g transform="translate(15.0 671.0)"><path d="M-9.500 -6L-5 -9L-1 -7.500L-3 6.500L-9.500 4Z" fill="#f4f4f4" stroke="#222" stroke-width=".8"/><path d="M-1.500 -10.500L2 -9.500L-1 -5Z" fill="#fff" stroke="#222" stroke-width=".7"/><path d="M-3.500 6.500L2 -7.500L8.500 -5.500L4.500 8.500L1 10Z" fill="url(#lb)" stroke="#223" stroke-width=".8"/></g><g transform="translate(43.0 671.0)"><path d="M-9 2L-6.500 0L-3.500 4.500Q2 -5 9 -10Q2 -2 -2.500 9Z" fill="#111"/></g><g transform="translate(15.0 699.0)"><path d="M-10 -4L-4 -7.500L2 -5V4L-4 7L-10 4.500Z" fill="#c8c8c8" stroke="#333" stroke-width=".8"/><path d="M-4 -1.500V7M-10 -4L-4 -1.500L2 -5" stroke="#555" stroke-width=".7" fill="none"/><path d="M4 -6.500L10 7Q5 10.500 -1 7Z" fill="url(#lg)" stroke="#333" stroke-width=".8"/></g><g transform="translate(43.0 699.0)"><path d="M0 -2.500L9 5.500L1 10.500L-8 6.500Z" fill="#f0a030" stroke="#8a5a10" stroke-width=".7"/><path d="M0 -2.500L1 10.500L-8 6.500Z" fill="#ffcc70"/><path d="M-2.500 -7.500L3 -11.500H9V-7H3.500L0 -5Z" fill="#fff" stroke="#222" stroke-width=".8"/><rect x="9" y="-12" width="2.500" height="6" fill="#111"/><path d="M-3 -6.500l4-3.500M-1.500 -5.500l4-3.500" stroke="#555" stroke-width=".7"/></g></svg>
<svg style="left:0;top:0" width="1440" height="900" viewBox="0 0 1440 900"><defs><clipPath id="c_top"><rect x="88" y="202" width="559" height="294"/></clipPath><clipPath id="c_per"><rect x="651" y="202" width="555" height="294"/></clipPath><clipPath id="c_fro"><rect x="88" y="500" width="559" height="292"/></clipPath><clipPath id="c_rig"><rect x="651" y="500" width="555" height="292"/></clipPath><linearGradient id="pg" x1="0" y1="0" x2="1" y2="0"><stop offset="0" stop-color="#7424d4"/><stop offset=".45" stop-color="#9a4cf2"/><stop offset="1" stop-color="#7424d4"/></linearGradient></defs><rect x="87" y="201" width="1120" height="592" fill="#c9cfe0"/><rect x="88" y="202" width="1118" height="590" fill="#eef0f5"/><rect x="647" y="201" width="1" height="592" fill="#c9cfe0"/><rect x="650" y="201" width="1" height="592" fill="#c9cfe0"/><rect x="87" y="496" width="1120" height="1" fill="#c9cfe0"/><rect x="87" y="499" width="1120" height="1" fill="#c9cfe0"/><rect x="648" y="496" width="2" height="4" fill="#eef0f5"/><rect x="88" y="202" width="559" height="294" fill="#9da3aa"/><rect x="651" y="202" width="555" height="294" fill="#9da3aa"/><rect x="88" y="500" width="559" height="292" fill="#9da3aa"/><rect x="651" y="500" width="555" height="292" fill="#9da3aa"/><g clip-path="url(#c_top)"><path d="M158.5 202.0V496.0M160.5 202.0V496.0M163.5 202.0V496.0M166.5 202.0V496.0M171.5 202.0V496.0M174.5 202.0V496.0M176.5 202.0V496.0M179.5 202.0V496.0M185.5 202.0V496.0M187.5 202.0V496.0M190.5 202.0V496.0M193.5 202.0V496.0M155.4 202.5H532.6M198.5 202.0V496.0M155.4 207.5H532.6M201.5 202.0V496.0M155.4 210.5H532.6M203.5 202.0V496.0M155.4 212.5H532.6M206.5 202.0V496.0M155.4 215.5H532.6M211.5 202.0V496.0M155.4 220.5H532.6M214.5 202.0V496.0M155.4 223.5H532.6M217.5 202.0V496.0M155.4 226.5H532.6M220.5 202.0V496.0M155.4 229.5H532.6M225.5 202.0V496.0M155.4 234.5H532.6M228.5 202.0V496.0M155.4 237.5H532.6M230.5 202.0V496.0M155.4 239.5H532.6M233.5 202.0V496.0M155.4 242.5H532.6M238.5 202.0V496.0M155.4 247.5H532.6M241.5 202.0V496.0M155.4 250.5H532.6M244.5 202.0V496.0M155.4 253.5H532.6M247.5 202.0V496.0M155.4 256.5H532.6M252.5 202.0V496.0M155.4 261.5H532.6M255.5 202.0V496.0M155.4 264.5H532.6M257.5 202.0V496.0M155.4 266.5H532.6M260.5 202.0V496.0M155.4 269.5H532.6M265.5 202.0V496.0M155.4 274.5H532.6M268.5 202.0V496.0M155.4 277.5H532.6M271.5 202.0V496.0M155.4 280.5H532.6M273.5 202.0V496.0M155.4 282.5H532.6M279.5 202.0V496.0M155.4 288.5H532.6M282.5 202.0V496.0M155.4 291.5H532.6M284.5 202.0V496.0M155.4 293.5H532.6M287.5 202.0V496.0M155.4 296.5H532.6M292.5 202.0V496.0M155.4 301.5H532.6M295.5 202.0V496.0M155.4 304.5H532.6M298.5 202.0V496.0M155.4 307.5H532.6M300.5 202.0V496.0M155.4 309.5H532.6M306.5 202.0V496.0M155.4 315.5H532.6M308.5 202.0V496.0M155.4 317.5H532.6M311.5 202.0V496.0M155.4 320.5H532.6M314.5 202.0V496.0M155.4 323.5H532.6M319.5 202.0V496.0M155.4 328.5H532.6M322.5 202.0V496.0M155.4 331.5H532.6M325.5 202.0V496.0M155.4 334.5H532.6M327.5 202.0V496.0M155.4 336.5H532.6M333.5 202.0V496.0M155.4 342.5H532.6M335.5 202.0V496.0M155.4 344.5H532.6M338.5 202.0V496.0M155.4 347.5H532.6M341.5 202.0V496.0M155.4 350.5H532.6M346.5 202.0V496.0M155.4 355.5H532.6M349.5 202.0V496.0M155.4 358.5H532.6M352.5 202.0V496.0M155.4 361.5H532.6M354.5 202.0V496.0M155.4 363.5H532.6M360.5 202.0V496.0M155.4 369.5H532.6M362.5 202.0V496.0M155.4 371.5H532.6M365.5 202.0V496.0M155.4 374.5H532.6M368.5 202.0V496.0M155.4 377.5H532.6M373.5 202.0V496.0M155.4 382.5H532.6M376.5 202.0V496.0M155.4 385.5H532.6M379.5 202.0V496.0M155.4 388.5H532.6M381.5 202.0V496.0M155.4 390.5H532.6M387.5 202.0V496.0M155.4 396.5H532.6M389.5 202.0V496.0M155.4 398.5H532.6M392.5 202.0V496.0M155.4 401.5H532.6M395.5 202.0V496.0M155.4 404.5H532.6M400.5 202.0V496.0M155.4 409.5H532.6M403.5 202.0V496.0M155.4 412.5H532.6M405.5 202.0V496.0M155.4 414.5H532.6M408.5 202.0V496.0M155.4 417.5H532.6M414.5 202.0V496.0M155.4 423.5H532.6M416.5 202.0V496.0M155.4 425.5H532.6M419.5 202.0V496.0M155.4 428.5H532.6M422.5 202.0V496.0M155.4 431.5H532.6M427.5 202.0V496.0M155.4 436.5H532.6M430.5 202.0V496.0M155.4 439.5H532.6M432.5 202.0V496.0M155.4 441.5H532.6M435.5 202.0V496.0M155.4 444.5H532.6M440.5 202.0V496.0M155.4 449.5H532.6M443.5 202.0V496.0M155.4 452.5H532.6M446.5 202.0V496.0M155.4 455.5H532.6M449.5 202.0V496.0M155.4 458.5H532.6M454.5 202.0V496.0M155.4 463.5H532.6M457.5 202.0V496.0M155.4 466.5H532.6M459.5 202.0V496.0M155.4 468.5H532.6M462.5 202.0V496.0M155.4 471.5H532.6M467.5 202.0V496.0M155.4 476.5H532.6M470.5 202.0V496.0M155.4 479.5H532.6M473.5 202.0V496.0M155.4 482.5H532.6M476.5 202.0V496.0M155.4 485.5H532.6M481.5 202.0V496.0M155.4 490.5H532.6M484.5 202.0V496.0M155.4 493.5H532.6M486.5 202.0V496.0M155.4 495.5H532.6M489.5 202.0V496.0M494.5 202.0V496.0M497.5 202.0V496.0M500.5 202.0V496.0M502.5 202.0V496.0M508.5 202.0V496.0M511.5 202.0V496.0M513.5 202.0V496.0M516.5 202.0V496.0M521.5 202.0V496.0M524.5 202.0V496.0M527.5 202.0V496.0M529.5 202.0V496.0" stroke="#959aa2" stroke-width="1" fill="none" shape-rendering="crispEdges"/><path d="M155.5 202.0V496.0M168.5 202.0V496.0M182.5 202.0V496.0M195.5 202.0V496.0M155.4 204.5H532.6M209.5 202.0V496.0M155.4 218.5H532.6M222.5 202.0V496.0M155.4 231.5H532.6M236.5 202.0V496.0M155.4 245.5H532.6M249.5 202.0V496.0M155.4 258.5H532.6M263.5 202.0V496.0M155.4 272.5H532.6M276.5 202.0V496.0M155.4 285.5H532.6M290.5 202.0V496.0M155.4 299.5H532.6M303.5 202.0V496.0M155.4 312.5H532.6M317.5 202.0V496.0M155.4 326.5H532.6M330.5 202.0V496.0M155.4 339.5H532.6M344.5 202.0V496.0M155.4 353.5H532.6M357.5 202.0V496.0M155.4 366.5H532.6M370.5 202.0V496.0M155.4 379.5H532.6M384.5 202.0V496.0M155.4 393.5H532.6M397.5 202.0V496.0M155.4 406.5H532.6M411.5 202.0V496.0M155.4 420.5H532.6M424.5 202.0V496.0M155.4 433.5H532.6M438.5 202.0V496.0M155.4 447.5H532.6M451.5 202.0V496.0M155.4 460.5H532.6M465.5 202.0V496.0M155.4 474.5H532.6M478.5 202.0V496.0M155.4 487.5H532.6M492.5 202.0V496.0M505.5 202.0V496.0M519.5 202.0V496.0M532.5 202.0V496.0" stroke="#828790" stroke-width="1" fill="none" shape-rendering="crispEdges"/><path d="M344.500 202V353.500" stroke="#4a9a4a" stroke-width="1.800"/><path d="M344.500 353.500H532" stroke="#a04040" stroke-width="1.800"/><circle cx="269.500" cy="334.500" r="120.400" fill="none" stroke="#0000ff" stroke-width="2.300"/><circle cx="269.500" cy="334.500" r="115.300" fill="none" stroke="#7f2ae0" stroke-width="2.100"/><path d="M269.9 219.2L269.9 214.2" stroke="#ff3030" stroke-width="1.200"/><path d="M265.1 219.3L264.9 214.3" stroke="#ff3030" stroke-width="1.200"/><path d="M162.4 377.3L157.8 379.2" stroke="#ff3030" stroke-width="1.200"/><path d="M164.3 381.8L159.8 383.8" stroke="#ff3030" stroke-width="1.200"/><path d="M351.3 415.7L354.9 419.3" stroke="#ff3030" stroke-width="1.200"/><path d="M354.6 412.2L358.3 415.6" stroke="#ff3030" stroke-width="1.200"/><circle cx="535.750" cy="384" r="96.300" fill="none" stroke="#0000ff" stroke-width="2.300"/><circle cx="535.750" cy="384" r="91.300" fill="none" stroke="#7f2ae0" stroke-width="2.100"/><path d="M468.9 321.9L465.2 318.4" stroke="#ff3030" stroke-width="1.200"/><path d="M466.3 324.7L462.5 321.5" stroke="#ff3030" stroke-width="1.200"/><path d="M621.5 352.6L626.2 350.9" stroke="#ff3030" stroke-width="1.200"/><path d="M620.1 349.1L624.7 347.1" stroke="#ff3030" stroke-width="1.200"/><path d="M536.4 475.3L536.4 480.3" stroke="#ff3030" stroke-width="1.200"/><path d="M540.2 475.2L540.5 480.2" stroke="#ff3030" stroke-width="1.200"/><path d="M148.500 326V310.500H390.500V326" fill="none" stroke="#000" stroke-width="1.200"/><text x="269.800" y="309" font-size="14" text-anchor="middle" font-family="Liberation Sans,sans-serif" fill="#000">90.00</text><path d="M124.500 431V460.500H154" fill="none" stroke="#5f646c"/><text x="127" y="429.500" font-size="13" font-family="Liberation Sans,sans-serif" fill="#5a5f67">y</text><text x="156.500" y="461" font-size="13" font-family="Liberation Sans,sans-serif" fill="#5a5f67">x</text></g><g clip-path="url(#c_fro)"><path d="M129.5 586.0V792.0M127.0 588.5H523.0M132.5 586.0V792.0M127.0 591.5H523.0M135.5 586.0V792.0M127.0 594.5H523.0M138.5 586.0V792.0M127.0 597.5H523.0M144.5 586.0V792.0M127.0 603.5H523.0M146.5 586.0V792.0M127.0 605.5H523.0M149.5 586.0V792.0M127.0 608.5H523.0M152.5 586.0V792.0M127.0 611.5H523.0M158.5 586.0V792.0M127.0 617.5H523.0M160.5 586.0V792.0M127.0 619.5H523.0M163.5 586.0V792.0M127.0 622.5H523.0M166.5 586.0V792.0M127.0 625.5H523.0M172.5 586.0V792.0M127.0 631.5H523.0M175.5 586.0V792.0M127.0 634.5H523.0M177.5 586.0V792.0M127.0 636.5H523.0M180.5 586.0V792.0M127.0 639.5H523.0M186.5 586.0V792.0M127.0 645.5H523.0M189.5 586.0V792.0M127.0 648.5H523.0M192.5 586.0V792.0M127.0 651.5H523.0M194.5 586.0V792.0M127.0 653.5H523.0M200.5 586.0V792.0M127.0 659.5H523.0M203.5 586.0V792.0M127.0 662.5H523.0M206.5 586.0V792.0M127.0 665.5H523.0M209.5 586.0V792.0M127.0 668.5H523.0M214.5 586.0V792.0M127.0 673.5H523.0M217.5 586.0V792.0M127.0 676.5H523.0M220.5 586.0V792.0M127.0 679.5H523.0M223.5 586.0V792.0M127.0 682.5H523.0M228.5 586.0V792.0M127.0 687.5H523.0M231.5 586.0V792.0M127.0 690.5H523.0M234.5 586.0V792.0M127.0 693.5H523.0M237.5 586.0V792.0M127.0 696.5H523.0M242.5 586.0V792.0M127.0 701.5H523.0M245.5 586.0V792.0M127.0 704.5H523.0M248.5 586.0V792.0M127.0 707.5H523.0M251.5 586.0V792.0M127.0 710.5H523.0M257.5 586.0V792.0M127.0 716.5H523.0M259.5 586.0V792.0M127.0 718.5H523.0M262.5 586.0V792.0M127.0 721.5H523.0M265.5 586.0V792.0M127.0 724.5H523.0M271.5 586.0V792.0M127.0 730.5H523.0M274.5 586.0V792.0M127.0 733.5H523.0M276.5 586.0V792.0M127.0 735.5H523.0M279.5 586.0V792.0M127.0 738.5H523.0M285.5 586.0V792.0M127.0 744.5H523.0M288.5 586.0V792.0M127.0 747.5H523.0M291.5 586.0V792.0M127.0 750.5H523.0M293.5 586.0V792.0M127.0 752.5H523.0M299.5 586.0V792.0M127.0 758.5H523.0M302.5 586.0V792.0M127.0 761.5H523.0M305.5 586.0V792.0M127.0 764.5H523.0M308.5 586.0V792.0M127.0 767.5H523.0M313.5 586.0V792.0M127.0 772.5H523.0M316.5 586.0V792.0M127.0 775.5H523.0M319.5 586.0V792.0M127.0 778.5H523.0M322.5 586.0V792.0M127.0 781.5H523.0M327.5 586.0V792.0M127.0 786.5H523.0M330.5 586.0V792.0M127.0 789.5H523.0M333.5 586.0V792.0M127.0 792.5H523.0M336.5 586.0V792.0M341.5 586.0V792.0M344.5 586.0V792.0M347.5 586.0V792.0M350.5 586.0V792.0M356.5 586.0V792.0M358.5 586.0V792.0M361.5 586.0V792.0M364.5 586.0V792.0M370.5 586.0V792.0M373.5 586.0V792.0M375.5 586.0V792.0M378.5 586.0V792.0M384.5 586.0V792.0M387.5 586.0V792.0M390.5 586.0V792.0M392.5 586.0V792.0M398.5 586.0V792.0M401.5 586.0V792.0M404.5 586.0V792.0M407.5 586.0V792.0M412.5 586.0V792.0M415.5 586.0V792.0M418.5 586.0V792.0M421.5 586.0V792.0M426.5 586.0V792.0M429.5 586.0V792.0M432.5 586.0V792.0M435.5 586.0V792.0M440.5 586.0V792.0M443.5 586.0V792.0M446.5 586.0V792.0M449.5 586.0V792.0M455.5 586.0V792.0M457.5 586.0V792.0M460.5 586.0V792.0M463.5 586.0V792.0M469.5 586.0V792.0M472.5 586.0V792.0M474.5 586.0V792.0M477.5 586.0V792.0M483.5 586.0V792.0M486.5 586.0V792.0M489.5 586.0V792.0M491.5 586.0V792.0M497.5 586.0V792.0M500.5 586.0V792.0M503.5 586.0V792.0M505.5 586.0V792.0M511.5 586.0V792.0M514.5 586.0V792.0M517.5 586.0V792.0M520.5 586.0V792.0" stroke="#959aa2" stroke-width="1" fill="none" shape-rendering="crispEdges"/><path d="M127.5 586.0V792.0M127.0 586.5H523.0M141.5 586.0V792.0M127.0 600.5H523.0M155.5 586.0V792.0M127.0 614.5H523.0M169.5 586.0V792.0M127.0 628.5H523.0M183.5 586.0V792.0M127.0 642.5H523.0M197.5 586.0V792.0M127.0 656.5H523.0M211.5 586.0V792.0M127.0 670.5H523.0M226.5 586.0V792.0M127.0 685.5H523.0M240.5 586.0V792.0M127.0 699.5H523.0M254.5 586.0V792.0M127.0 713.5H523.0M268.5 586.0V792.0M127.0 727.5H523.0M282.5 586.0V792.0M127.0 741.5H523.0M296.5 586.0V792.0M127.0 755.5H523.0M310.5 586.0V792.0M127.0 769.5H523.0M325.5 586.0V792.0M127.0 784.5H523.0M339.5 586.0V792.0M353.5 586.0V792.0M367.5 586.0V792.0M381.5 586.0V792.0M395.5 586.0V792.0M409.5 586.0V792.0M423.5 586.0V792.0M438.5 586.0V792.0M452.5 586.0V792.0M466.5 586.0V792.0M480.5 586.0V792.0M494.5 586.0V792.0M508.5 586.0V792.0M522.5 586.0V792.0" stroke="#828790" stroke-width="1" fill="none" shape-rendering="crispEdges"/><path d="M325.500 586.500V784" stroke="#4a9a4a" stroke-width="1.800"/><path d="M325.500 784H523.500" stroke="#a04040" stroke-width="1.800"/><path d="M120.5 554.3H374.7" stroke="#0000ff" stroke-width="2"/><path d="M137.3 554.3V560.2" stroke="#0000ff" stroke-width="1.300"/><path d="M183.3 554.3V560.2" stroke="#0000ff" stroke-width="1.300"/><path d="M311.6 554.3V560.2" stroke="#0000ff" stroke-width="1.300"/><path d="M356.8 554.3V560.2" stroke="#0000ff" stroke-width="1.300"/><rect x="121.0" y="560.2" width="254.5" height="5.8" rx="1" fill="none" stroke="#7f2ae0" stroke-width="1.700"/><path d="M126.5 560.2v5.8M369.5 560.2v5.8" stroke="#7f2ae0" stroke-width="1"/><path d="M120.5 560.2H374.7" stroke="#0000ff" stroke-width="1.800" stroke-dasharray="7 2.500"/><rect x="121.0" y="729.4" width="220.5" height="5.8" rx="1" fill="none" stroke="#7f2ae0" stroke-width="1.700"/><rect x="129.0" y="566.0" width="4.2" height="163.4" fill="#ff4040"/><rect x="134.2" y="566.0" width="4.2" height="163.4" fill="#ff4040"/><path d="M242.0 566.0V729.4" stroke="#ff4040" stroke-width="1.500"/><path d="M247.5 566.0V729.4" stroke="#ff4040" stroke-width="1.500"/><path d="M332.8 566.0V729.4" stroke="#ff4040" stroke-width="1.500"/><path d="M337.2 566.0V729.4" stroke="#ff4040" stroke-width="1.500"/><rect x="337.0" y="565.2" width="4.2" height="164.7" rx="2" fill="none" stroke="#ff4040" stroke-width="1.400"/><path d="M120.500 729.400H337" stroke="#000" stroke-width="1.300"/><path d="M133 729.400v5.800M138 729.400v5.800M143 729.400v5.800M227 729.400v5.800M247.500 729.400v5.800" stroke="#7f2ae0" stroke-width="1"/><path d="M424.8 568.3H628.2" stroke="#0000ff" stroke-width="2"/><path d="M453.5 568.3V574.2" stroke="#0000ff" stroke-width="1.300"/><path d="M455.5 568.3V574.2" stroke="#0000ff" stroke-width="1.300"/><path d="M597.7 568.3V574.2" stroke="#0000ff" stroke-width="1.300"/><path d="M599.7 568.3V574.2" stroke="#0000ff" stroke-width="1.300"/><rect x="425.3" y="574.2" width="203.7" height="5.8" rx="1" fill="none" stroke="#7f2ae0" stroke-width="1.700"/><path d="M430.8 574.2v5.8M623.0 574.2v5.8" stroke="#7f2ae0" stroke-width="1"/><path d="M424.8 574.2H628.2" stroke="#0000ff" stroke-width="1.800" stroke-dasharray="7 2.500"/><rect x="425.3" y="720.8" width="203.7" height="5.8" rx="1" fill="none" stroke="#7f2ae0" stroke-width="1.700"/><path d="M449.0 580.0V720.8" stroke="#ff4040" stroke-width="1.500"/><path d="M452.8 580.0V720.8" stroke="#ff4040" stroke-width="1.500"/><path d="M456.9 580.0V720.8" stroke="#ff4040" stroke-width="1.500"/><rect x="526.4" y="579.2" width="6.5" height="142.1" rx="2" fill="none" stroke="#ff4040" stroke-width="1.400"/><rect x="614.1" y="580.0" width="3.9" height="140.8" fill="#ff4040"/><rect x="619.3" y="580.0" width="4.3" height="140.8" fill="#ff4040"/><path d="M424.800 727H629" stroke="#000" stroke-width="1.300"/><path d="M526.400 574.500v6M526.400 721v6" stroke="#7f2ae0" stroke-width="1"/><path d="M124.500 727V756.500H153.500" fill="none" stroke="#5f646c"/><text x="126.500" y="725.500" font-size="13" font-family="Liberation Sans,sans-serif" fill="#5a5f67">z</text><text x="156.500" y="757" font-size="13" font-family="Liberation Sans,sans-serif" fill="#5a5f67">x</text></g><g clip-path="url(#c_rig)"><path d="M651.0 581.5H1101.4M651.0 584.5H1101.4M651.0 587.5H1101.4M651.5 578.0V792.0M651.0 591.5H1101.4M658.5 578.0V792.0M651.0 597.5H1101.4M661.5 578.0V792.0M651.0 601.5H1101.4M665.5 578.0V792.0M651.0 604.5H1101.4M668.5 578.0V792.0M651.0 607.5H1101.4M674.5 578.0V792.0M651.0 614.5H1101.4M678.5 578.0V792.0M651.0 617.5H1101.4M681.5 578.0V792.0M651.0 620.5H1101.4M684.5 578.0V792.0M651.0 624.5H1101.4M691.5 578.0V792.0M651.0 630.5H1101.4M694.5 578.0V792.0M651.0 634.5H1101.4M698.5 578.0V792.0M651.0 637.5H1101.4M701.5 578.0V792.0M651.0 640.5H1101.4M708.5 578.0V792.0M651.0 647.5H1101.4M711.5 578.0V792.0M651.0 650.5H1101.4M714.5 578.0V792.0M651.0 654.5H1101.4M717.5 578.0V792.0M651.0 657.5H1101.4M724.5 578.0V792.0M651.0 663.5H1101.4M727.5 578.0V792.0M651.0 667.5H1101.4M731.5 578.0V792.0M651.0 670.5H1101.4M734.5 578.0V792.0M651.0 673.5H1101.4M741.5 578.0V792.0M651.0 680.5H1101.4M744.5 578.0V792.0M651.0 683.5H1101.4M747.5 578.0V792.0M651.0 687.5H1101.4M750.5 578.0V792.0M651.0 690.5H1101.4M757.5 578.0V792.0M651.0 696.5H1101.4M760.5 578.0V792.0M651.0 700.5H1101.4M764.5 578.0V792.0M651.0 703.5H1101.4M767.5 578.0V792.0M651.0 706.5H1101.4M774.5 578.0V792.0M651.0 713.5H1101.4M777.5 578.0V792.0M651.0 716.5H1101.4M780.5 578.0V792.0M651.0 720.5H1101.4M784.5 578.0V792.0M651.0 723.5H1101.4M790.5 578.0V792.0M651.0 730.5H1101.4M793.5 578.0V792.0M651.0 733.5H1101.4M797.5 578.0V792.0M651.0 736.5H1101.4M800.5 578.0V792.0M651.0 739.5H1101.4M807.5 578.0V792.0M651.0 746.5H1101.4M810.5 578.0V792.0M651.0 749.5H1101.4M813.5 578.0V792.0M651.0 753.5H1101.4M817.5 578.0V792.0M651.0 756.5H1101.4M823.5 578.0V792.0M651.0 763.5H1101.4M827.5 578.0V792.0M651.0 766.5H1101.4M830.5 578.0V792.0M651.0 769.5H1101.4M833.5 578.0V792.0M651.0 773.5H1101.4M840.5 578.0V792.0M651.0 779.5H1101.4M843.5 578.0V792.0M651.0 782.5H1101.4M846.5 578.0V792.0M651.0 786.5H1101.4M850.5 578.0V792.0M651.0 789.5H1101.4M856.5 578.0V792.0M860.5 578.0V792.0M863.5 578.0V792.0M866.5 578.0V792.0M873.5 578.0V792.0M876.5 578.0V792.0M879.5 578.0V792.0M883.5 578.0V792.0M889.5 578.0V792.0M893.5 578.0V792.0M896.5 578.0V792.0M899.5 578.0V792.0M906.5 578.0V792.0M909.5 578.0V792.0M912.5 578.0V792.0M916.5 578.0V792.0M922.5 578.0V792.0M926.5 578.0V792.0M929.5 578.0V792.0M932.5 578.0V792.0M939.5 578.0V792.0M942.5 578.0V792.0M946.5 578.0V792.0M949.5 578.0V792.0M955.5 578.0V792.0M959.5 578.0V792.0M962.5 578.0V792.0M965.5 578.0V792.0M972.5 578.0V792.0M975.5 578.0V792.0M979.5 578.0V792.0M982.5 578.0V792.0M989.5 578.0V792.0M992.5 578.0V792.0M995.5 578.0V792.0M998.5 578.0V792.0M1005.5 578.0V792.0M1008.5 578.0V792.0M1012.5 578.0V792.0M1015.5 578.0V792.0M1022.5 578.0V792.0M1025.5 578.0V792.0M1028.5 578.0V792.0M1031.5 578.0V792.0M1038.5 578.0V792.0M1041.5 578.0V792.0M1045.5 578.0V792.0M1048.5 578.0V792.0M1055.5 578.0V792.0M1058.5 578.0V792.0M1061.5 578.0V792.0M1065.5 578.0V792.0M1071.5 578.0V792.0M1074.5 578.0V792.0M1078.5 578.0V792.0M1081.5 578.0V792.0M1088.5 578.0V792.0M1091.5 578.0V792.0M1094.5 578.0V792.0M1098.5 578.0V792.0" stroke="#959aa2" stroke-width="1" fill="none" shape-rendering="crispEdges"/><path d="M651.0 577.5H1101.4M655.5 578.0V792.0M651.0 594.5H1101.4M671.5 578.0V792.0M651.0 611.5H1101.4M688.5 578.0V792.0M651.0 627.5H1101.4M704.5 578.0V792.0M651.0 644.5H1101.4M721.5 578.0V792.0M651.0 660.5H1101.4M737.5 578.0V792.0M651.0 677.5H1101.4M754.5 578.0V792.0M651.0 693.5H1101.4M770.5 578.0V792.0M651.0 710.5H1101.4M787.5 578.0V792.0M651.0 726.5H1101.4M803.5 578.0V792.0M651.0 743.5H1101.4M820.5 578.0V792.0M651.0 759.5H1101.4M836.5 578.0V792.0M651.0 776.5H1101.4M853.5 578.0V792.0M651.0 792.5H1101.4M870.5 578.0V792.0M886.5 578.0V792.0M903.5 578.0V792.0M919.5 578.0V792.0M936.5 578.0V792.0M952.5 578.0V792.0M969.5 578.0V792.0M985.5 578.0V792.0M1002.5 578.0V792.0M1018.5 578.0V792.0M1035.5 578.0V792.0M1051.5 578.0V792.0M1068.5 578.0V792.0M1084.5 578.0V792.0M1101.5 578.0V792.0" stroke="#828790" stroke-width="1" fill="none" shape-rendering="crispEdges"/><path d="M870.500 737V792" stroke="#4a9a4a" stroke-width="1.800"/><path d="M745.0 540.9H1042.0" stroke="#0000ff" stroke-width="2"/><path d="M765.4 540.9V547.1" stroke="#0000ff" stroke-width="1.300"/><path d="M818.4 540.9V547.1" stroke="#0000ff" stroke-width="1.300"/><path d="M968.3 540.9V547.1" stroke="#0000ff" stroke-width="1.300"/><path d="M1021.3 540.9V547.1" stroke="#0000ff" stroke-width="1.300"/><rect x="745.5" y="547.1" width="297.3" height="6.5" rx="1" fill="none" stroke="#7f2ae0" stroke-width="1.700"/><path d="M751.0 547.1v6.5M1036.8 547.1v6.5" stroke="#7f2ae0" stroke-width="1"/><path d="M745.0 547.1H1042.0" stroke="#0000ff" stroke-width="1.800" stroke-dasharray="7 2.500"/><rect x="745.5" y="745.0" width="297.3" height="6.5" rx="1" fill="none" stroke="#7f2ae0" stroke-width="1.700"/><path d="M787.8 553.6V745.0" stroke="#ff4040" stroke-width="1.500"/><path d="M792.8 553.6V745.0" stroke="#ff4040" stroke-width="1.500"/><path d="M797.2 553.6V745.0" stroke="#ff4040" stroke-width="1.500"/><path d="M831.0 553.6V745.0" stroke="#ff4040" stroke-width="1.500"/><path d="M835.0 553.6V745.0" stroke="#ff4040" stroke-width="1.500"/><path d="M839.3 553.6V745.0" stroke="#ff4040" stroke-width="1.500"/><path d="M1035.5 553.6V745.0" stroke="#ff4040" stroke-width="1.500"/><path d="M1042.0 553.6V745.0" stroke="#ff4040" stroke-width="1.500"/><path d="M787 553.600q3-2 6 0M787 746.500q3 2 6 0" stroke="#ff4040" stroke-width="1.300" fill="none"/><path d="M713.3 557.4H950.8" stroke="#0000ff" stroke-width="2"/><path d="M747.5 557.4V563.9" stroke="#0000ff" stroke-width="1.300"/><path d="M749.5 557.4V563.9" stroke="#0000ff" stroke-width="1.300"/><path d="M914.3 557.4V563.9" stroke="#0000ff" stroke-width="1.300"/><path d="M916.3 557.4V563.9" stroke="#0000ff" stroke-width="1.300"/><rect x="713.8" y="563.9" width="237.8" height="6.6" rx="1" fill="none" stroke="#7f2ae0" stroke-width="1.700"/><path d="M719.3 563.9v6.6M945.6 563.9v6.6" stroke="#7f2ae0" stroke-width="1"/><path d="M713.3 563.9H950.8" stroke="#0000ff" stroke-width="1.800" stroke-dasharray="7 2.500"/><rect x="713.8" y="735.4" width="237.8" height="6.6" rx="1" fill="none" stroke="#7f2ae0" stroke-width="1.700"/><path d="M713.8 570.5V735.4" stroke="#ff4040" stroke-width="1.500"/><path d="M720.0 570.5V735.4" stroke="#ff4040" stroke-width="1.500"/><rect x="870.3" y="570.5" width="3.7" height="164.9" fill="#ff4040"/><rect x="875.0" y="570.5" width="4.0" height="164.9" fill="#ff4040"/><path d="M904.4 570.5V735.4" stroke="#ff4040" stroke-width="1.500"/><path d="M908.9 570.5V735.4" stroke="#ff4040" stroke-width="1.500"/><path d="M913.9 570.5V735.4" stroke="#ff4040" stroke-width="1.500"/><path d="M713.300 742.400H958M745 745.500H958" stroke="#000" stroke-width="1.200"/><path d="M791 735.600v6M836 735.600v6M791 745.200v6M836 745.200v6M975 745.200v6" stroke="#7f2ae0" stroke-width="1"/><path d="M712 557.500H690.500V742.500H712" fill="none" stroke="#000" stroke-width="1.200"/><path d="M1044 547.700H1086.500M1044 751.700H1086.500M1085.500 547.700V751.700" fill="none" stroke="#000" stroke-width="1.200"/><text transform="translate(689.500 649.500) rotate(-90)" font-size="18" text-anchor="middle" font-family="Liberation Sans,sans-serif" fill="#000">56.00</text><text transform="translate(1083.500 649.500) rotate(-90)" font-size="18" text-anchor="middle" font-family="Liberation Sans,sans-serif" fill="#000">62.00</text><path d="M687.500 727V757.500H717" fill="none" stroke="#5f646c"/><text x="690" y="726" font-size="13" font-family="Liberation Sans,sans-serif" fill="#5a5f67">z</text><text x="720" y="757.500" font-size="13" font-family="Liberation Sans,sans-serif" fill="#5a5f67">y</text></g><g clip-path="url(#c_per)"><path d="M832.9 392.0 L1070.9 420.5 L1017.9 573.0 L661.4 496.6 Z" fill="#9da3aa"/><path d="M832.9 392.0L661.4 496.6 M661.4 496.6L1017.9 573.0 M840.3 392.9L671.6 498.8 M670.7 490.9L1021.0 564.0 M847.7 393.8L681.8 501.0 M679.7 485.5L1024.0 555.5 M855.2 394.7L692.2 503.2 M688.3 480.2L1026.8 547.3 M862.8 395.6L702.8 505.5 M696.6 475.2L1029.5 539.5 M870.5 396.5L713.6 507.8 M704.6 470.3L1032.1 532.0 M878.3 397.4L724.5 510.1 M712.3 465.6L1034.6 524.9 M886.1 398.4L735.6 512.5 M719.7 461.0L1037.0 518.0 M894.0 399.3L746.8 514.9 M726.9 456.6L1039.3 511.5 M902.0 400.3L758.3 517.4 M733.9 452.4L1041.5 505.2 M910.0 401.2L769.9 519.9 M740.6 448.3L1043.6 499.1 M918.2 402.2L781.8 522.4 M747.2 444.3L1045.6 493.3 M926.4 403.2L793.8 525.0 M753.5 440.5L1047.5 487.8 M934.7 404.2L806.1 527.6 M759.6 436.7L1049.4 482.4 M943.2 405.2L818.5 530.3 M765.5 433.1L1051.2 477.2 M951.7 406.2L831.2 533.0 M771.3 429.6L1053.0 472.2 M960.2 407.3L844.0 535.7 M776.9 426.2L1054.6 467.4 M968.9 408.3L857.1 538.6 M782.3 422.9L1056.3 462.7 M977.7 409.4L870.5 541.4 M787.6 419.7L1057.8 458.2 M986.6 410.4L884.0 544.3 M792.7 416.5L1059.3 453.9 M995.5 411.5L897.8 547.3 M797.6 413.5L1060.8 449.7 M1004.6 412.6L911.9 550.3 M802.5 410.6L1062.2 445.6 M1013.8 413.7L926.2 553.4 M807.2 407.7L1063.6 441.7 M1023.0 414.8L940.8 556.5 M811.8 404.9L1064.9 437.9 M1032.4 415.9L955.6 559.7 M816.2 402.2L1066.2 434.2 M1041.9 417.0L970.7 562.9 M820.6 399.5L1067.4 430.6 M1051.5 418.2L986.2 566.2 M824.8 397.0L1068.6 427.2 M1061.1 419.4L1001.9 569.6 M828.9 394.4L1069.8 423.8 M1070.9 420.5L1017.9 573.0 M832.9 392.0L1070.9 420.5" stroke="#868b93" stroke-width=".9" fill="none"/><path d="M895.4 453.1L943.2 405.2" stroke="#4b9b4b" stroke-width="1.400"/><path d="M895.4 453.1L979.3 466.8" stroke="#9c4343" stroke-width="1.400"/><path d="M687.500 431V460.500L716 463M687.500 460.500L696.500 453.500" fill="none" stroke="#5f646c"/><text x="690" y="430.500" font-size="13" font-family="Liberation Sans,sans-serif" fill="#5a5f67">z</text><text x="700" y="453" font-size="13" font-family="Liberation Sans,sans-serif" fill="#5a5f67">y</text><text x="718.500" y="465.500" font-size="13" font-family="Liberation Sans,sans-serif" fill="#5a5f67">x</text><path d="M749.9 413.7 L749.9 412.6 L750.0 411.5 L750.2 410.5 L750.5 409.4 L750.9 408.3 L751.4 407.3 L752.0 406.2 L752.7 405.2 L753.5 404.1 L754.4 403.1 L755.3 402.0 L756.4 401.0 L757.6 400.0 L758.8 399.0 L760.2 398.0 L761.6 397.0 L763.1 396.0 L764.7 395.0 L766.4 394.1 L768.2 393.2 L770.0 392.2 L772.0 391.3 L774.0 390.5 L776.0 389.6 L778.2 388.8 L780.4 388.0 L782.7 387.2 L785.1 386.4 L787.5 385.6 L790.0 384.9 L792.5 384.2 L795.1 383.6 L797.7 382.9 L800.4 382.3 L803.1 381.7 L805.9 381.2 L808.7 380.6 L811.6 380.1 L814.5 379.7 L817.4 379.2 L820.4 378.8 L823.3 378.5 L826.3 378.1 L829.4 377.8 L832.4 377.5 L835.5 377.3 L838.5 377.1 L841.6 376.9 L844.7 376.8 L847.7 376.7 L850.8 376.6 L853.9 376.6 L856.9 376.6 L859.9 376.6 L863.0 376.7 L866.0 376.8 L869.0 376.9 L871.9 377.1 L874.9 377.3 L877.8 377.5" fill="none" stroke="#7f2ae0" stroke-width="5.500"/><path d="M753.9 401.3 L754.8 400.5 L755.7 399.6 L756.7 398.7 L757.7 397.9 L758.9 397.0 L760.0 396.2 L761.3 395.3 L762.6 394.5 L763.9 393.7 L765.3 392.9 L766.8 392.1 L768.3 391.3 L769.9 390.5 L771.5 389.8 L773.2 389.0 L774.9 388.3 L776.7 387.6 L778.5 386.9 L780.4 386.2 L782.3 385.5 L784.3 384.9 L786.3 384.3 L788.3 383.6 L790.4 383.0 L792.5 382.5 L794.7 381.9 L796.9 381.3 L799.1 380.8 L801.4 380.3 L803.7 379.8 L806.0 379.4 L808.3 378.9 L810.7 378.5 L813.1 378.1 L815.5 377.7 L818.0 377.4 L820.4 377.0 L822.9 376.7 L825.4 376.4 L827.9 376.2 L830.4 375.9 L832.9 375.7 L835.5 375.5 L838.0 375.3 L840.6 375.2 L843.1 375.0 L845.7 374.9 L848.2 374.9 L850.8 374.8 L853.3 374.8 L855.9 374.8 L858.4 374.8 L860.9 374.8 L863.4 374.9 L865.9 375.0 L868.4 375.1 L870.9 375.2 L873.3 375.4 L875.8 375.6 L878.2 375.8" fill="none" stroke="#1a0a30" stroke-width=".9"/><path d="M893.500 295L894.500 373L885 378.500" fill="none" stroke="#000" stroke-width=".9"/><path d="M895 309V330" stroke="#333" stroke-width="1.500"/><path d="M740.500 286H747.700L755.500 404.500H749Z" fill="#ff4040"/><path d="M744.500 286L752.500 404.500" stroke="#e23030" stroke-width="1" fill="none"/><path d="M884.6 436.3 L881.6 436.9 L878.5 437.4 L875.5 437.9 L872.3 438.4 L869.2 438.8 L866.0 439.2 L862.7 439.6 L859.5 439.9 L856.2 440.2 L853.0 440.4 L849.7 440.6 L846.4 440.8 L843.1 440.9 L839.8 441.0 L836.6 441.0 L833.3 441.0 L830.0 441.0 L826.8 440.9 L823.6 440.8 L820.4 440.7 L817.2 440.5 L814.1 440.2 L811.0 440.0 L808.0 439.7 L805.0 439.3 L802.0 438.9 L799.1 438.5 L796.3 438.0 L793.5 437.6 L790.8 437.0 L788.1 436.5 L785.5 435.9 L783.0 435.2 L780.6 434.6 L778.2 433.9 L775.9 433.1 L773.7 432.4 L771.6 431.6 L769.6 430.8 L767.7 430.0 L765.9 429.1 L764.1 428.2 L762.5 427.3 L760.9 426.3 L759.5 425.4 L758.2 424.4 L757.0 423.4 L755.8 422.4 L754.8 421.3 L753.9 420.3 L753.1 419.2 L752.5 418.2 L751.9 417.1 L751.5 416.0 L751.1 414.9 L750.9 413.7 L750.8 412.6 L750.8 411.5 L750.9 410.4 L751.2 409.2" fill="none" stroke="#7f2ae0" stroke-width="7"/><path d="M885.7 438.7 L882.9 439.3 L880.1 439.8 L877.2 440.3 L874.3 440.8 L871.4 441.2 L868.4 441.6 L865.4 442.0 L862.4 442.3 L859.4 442.6 L856.3 442.9 L853.3 443.1 L850.2 443.3 L847.2 443.4 L844.1 443.6 L841.0 443.6 L838.0 443.7 L834.9 443.7 L831.9 443.7 L828.8 443.6 L825.8 443.6 L822.8 443.4 L819.9 443.3 L816.9 443.1 L814.0 442.9 L811.1 442.6 L808.3 442.3 L805.4 442.0 L802.7 441.6 L799.9 441.2 L797.2 440.8 L794.6 440.3 L792.0 439.8 L789.5 439.3 L787.0 438.7 L784.6 438.1 L782.2 437.5 L779.9 436.9 L777.7 436.2 L775.5 435.5 L773.4 434.8 L771.4 434.0 L769.4 433.2 L767.5 432.4 L765.7 431.6 L764.0 430.7 L762.4 429.9 L760.8 429.0 L759.4 428.0 L758.0 427.1 L756.7 426.1 L755.5 425.2 L754.4 424.2 L753.3 423.2 L752.4 422.1 L751.6 421.1 L750.8 420.1 L750.2 419.0 L749.6 417.9 L749.2 416.8 L748.8 415.8" fill="none" stroke="#5a18b0" stroke-width="2"/><path d="M878.0 436.2 L875.5 436.6 L872.9 437.0 L870.4 437.4 L867.7 437.7 L865.1 438.0 L862.5 438.3 L859.8 438.6 L857.1 438.8 L854.4 439.0 L851.8 439.2 L849.1 439.3 L846.4 439.5 L843.6 439.6 L840.9 439.7 L838.2 439.7 L835.6 439.7 L832.9 439.7 L830.2 439.7 L827.5 439.7 L824.9 439.6 L822.3 439.5 L819.6 439.3 L817.1 439.2 L814.5 439.0 L812.0 438.8 L809.4 438.5 L807.0 438.3 L804.5 438.0 L802.1 437.7 L799.7 437.3 L797.4 437.0 L795.1 436.6 L792.8 436.2 L790.6 435.8 L788.4 435.3 L786.3 434.8 L784.2 434.3 L782.2 433.8 L780.3 433.3 L778.3 432.7 L776.5 432.1 L774.7 431.5 L773.0 430.9 L771.3 430.2 L769.7 429.6 L768.1 428.9 L766.6 428.2 L765.2 427.5 L763.9 426.8 L762.6 426.0 L761.4 425.3 L760.2 424.5 L759.2 423.7 L758.2 422.9 L757.2 422.1 L756.4 421.3 L755.6 420.4 L754.9 419.6 L754.3 418.7 L753.7 417.9" fill="none" stroke="#1a0a30" stroke-width=".9"/><path d="M874.500 294H884L885.700 435.500H877.600Z" fill="#ff4040"/><path d="M879.500 294L881.800 435.500" stroke="#e23030" stroke-width="1" fill="none"/><path d="M736.600 273.500V284A103.500 13.200 0 0 0 943.600 284V273.500Z" fill="url(#pg)"/><path d="M736.600 273.500V277.500A103.500 13.200 0 0 0 943.600 277.500V273.500Z" fill="#1212ff"/><path d="M737.500 279.300A103.500 13.200 0 0 0 942.700 279.300" fill="none" stroke="#1818f8" stroke-width="2.200" stroke-dasharray="4.500 4"/><ellipse cx="840.100" cy="273.500" rx="103.500" ry="13.500" fill="#0000ff"/><ellipse cx="840.100" cy="273.700" rx="101.800" ry="12.300" fill="#00008b"/><path d="M770 264.500L943 274.500" stroke="#000" stroke-width="1"/><path d="M961.5 440.4 L961.4 438.4 L961.6 436.4 L962.0 434.5 L962.7 432.6 L963.8 430.7 L965.0 428.9 L966.6 427.2 L968.4 425.5 L970.5 423.9 L972.8 422.3 L975.4 420.8 L978.2 419.4 L981.2 418.1 L984.4 416.8 L987.9 415.7 L991.6 414.6 L995.4 413.6 L999.4 412.8 L1003.6 412.0 L1008.0 411.4 L1012.4 410.8 L1017.0 410.4 L1021.7 410.1 L1026.5 409.8 L1031.4 409.7 L1036.4 409.7 L1041.4 409.9 L1046.4 410.1 L1051.5 410.4 L1056.5 410.9 L1061.6 411.4 L1066.6 412.1 L1071.6 412.9 L1076.5 413.7 L1081.4 414.7 L1086.2 415.8 L1090.8 416.9 L1095.4 418.2 L1099.8 419.5 L1104.1 421.0 L1108.2 422.5 L1112.2 424.0 L1115.9 425.7 L1119.5 427.4 L1122.9 429.1 L1126.1 431.0 L1129.0 432.8 L1131.7 434.7 L1134.2 436.7 L1136.4 438.6 L1138.4 440.6 L1140.1 442.6 L1141.5 444.6 L1142.7 446.7 L1143.6 448.7 L1144.2 450.7 L1144.5 452.7 L1144.6 454.7 L1144.4 456.7 L1143.9 458.6" fill="none" stroke="#7f2ae0" stroke-width="6"/><path d="M982.4 421.0 L984.2 420.3 L986.1 419.6 L988.1 418.9 L990.1 418.3 L992.3 417.7 L994.5 417.1 L996.7 416.6 L999.0 416.1 L1001.4 415.6 L1003.9 415.2 L1006.3 414.8 L1008.9 414.4 L1011.5 414.1 L1014.1 413.8 L1016.8 413.6 L1019.5 413.4 L1022.3 413.2 L1025.1 413.1 L1027.9 413.0 L1030.8 412.9 L1033.7 412.9 L1036.6 412.9 L1039.5 413.0 L1042.4 413.1 L1045.4 413.2 L1048.3 413.4 L1051.3 413.6 L1054.3 413.9 L1057.2 414.2 L1060.2 414.5 L1063.1 414.8 L1066.1 415.2 L1069.0 415.7 L1071.9 416.1 L1074.8 416.7 L1077.7 417.2 L1080.5 417.8 L1083.3 418.4 L1086.1 419.0 L1088.8 419.7 L1091.5 420.4 L1094.1 421.1 L1096.7 421.9 L1099.3 422.7 L1101.8 423.5 L1104.2 424.3 L1106.6 425.2 L1109.0 426.1 L1111.2 427.0 L1113.4 428.0 L1115.6 428.9 L1117.6 429.9 L1119.6 430.9 L1121.5 431.9 L1123.4 433.0 L1125.1 434.0 L1126.8 435.1 L1128.4 436.2 L1129.9 437.3 L1131.4 438.4" fill="none" stroke="#1a0a30" stroke-width="1"/><path d="M995.700 331H1006L1005 410.500H995.300Z" fill="#ff4040"/><path d="M1001 331L1000 410" stroke="#e23030" stroke-width="1"/><path d="M1144 328H1153.500L1143.500 438.500H1135Z" fill="#ff4040"/><path d="M1149 328L1139.500 438" stroke="#e23030" stroke-width="1"/><path d="M1143.8 450.6 L1144.2 452.6 L1144.3 454.6 L1144.1 456.6 L1143.6 458.5 L1142.8 460.5 L1141.7 462.3 L1140.3 464.1 L1138.6 465.9 L1136.7 467.6 L1134.5 469.2 L1132.0 470.8 L1129.2 472.2 L1126.3 473.6 L1123.0 474.9 L1119.6 476.1 L1115.9 477.2 L1112.0 478.2 L1108.0 479.1 L1103.7 479.9 L1099.3 480.6 L1094.8 481.2 L1090.1 481.7 L1085.3 482.0 L1080.3 482.3 L1075.3 482.4 L1070.2 482.4 L1065.1 482.3 L1059.9 482.0 L1054.7 481.7 L1049.5 481.2 L1044.3 480.7 L1039.2 480.0 L1034.0 479.2 L1029.0 478.3 L1024.0 477.3 L1019.1 476.2 L1014.3 475.0 L1009.7 473.7 L1005.2 472.3 L1000.8 470.8 L996.6 469.3 L992.6 467.6 L988.8 465.9 L985.2 464.2 L981.9 462.4 L978.7 460.5 L975.8 458.6 L973.2 456.7 L970.8 454.7 L968.6 452.7 L966.8 450.6 L965.2 448.6 L963.9 446.5 L962.9 444.5 L962.2 442.4 L961.8 440.4 L961.7 438.4 L961.9 436.4 L962.4 434.4 L963.1 432.5" fill="none" stroke="#7f2ae0" stroke-width="7.500"/><path d="M1146.3 459.0 L1145.6 460.9 L1144.7 462.6 L1143.6 464.4 L1142.2 466.0 L1140.6 467.7 L1138.8 469.3 L1136.8 470.8 L1134.5 472.3 L1132.1 473.7 L1129.5 475.0 L1126.7 476.3 L1123.7 477.5 L1120.5 478.6 L1117.2 479.7 L1113.7 480.6 L1110.1 481.5 L1106.4 482.3 L1102.5 483.0 L1098.4 483.6 L1094.3 484.1 L1090.1 484.6 L1085.8 484.9 L1081.4 485.2 L1076.9 485.3 L1072.4 485.4 L1067.8 485.3 L1063.2 485.2 L1058.5 485.0 L1053.9 484.6 L1049.2 484.2 L1044.6 483.7 L1040.0 483.1 L1035.4 482.4 L1030.8 481.6 L1026.3 480.8 L1021.9 479.8 L1017.5 478.8 L1013.3 477.7 L1009.1 476.5 L1005.1 475.2 L1001.1 473.9 L997.3 472.5 L993.6 471.0 L990.1 469.5 L986.7 467.9 L983.5 466.3 L980.4 464.6 L977.5 462.9 L974.9 461.1 L972.4 459.3 L970.1 457.5 L968.0 455.6 L966.1 453.8 L964.4 451.9 L962.9 449.9 L961.7 448.0 L960.7 446.1 L959.9 444.2 L959.3 442.3 L959.0 440.3" fill="none" stroke="#5a18b0" stroke-width="2"/><path d="M1140.6 461.0 L1139.6 462.4 L1138.5 463.8 L1137.1 465.2 L1135.6 466.5 L1133.9 467.8 L1132.0 469.0 L1130.0 470.2 L1127.8 471.4 L1125.4 472.5 L1122.8 473.5 L1120.2 474.4 L1117.3 475.3 L1114.4 476.2 L1111.2 477.0 L1108.0 477.7 L1104.7 478.3 L1101.2 478.9 L1097.6 479.4 L1094.0 479.8 L1090.2 480.2 L1086.4 480.5 L1082.5 480.7 L1078.5 480.8 L1074.5 480.9 L1070.4 480.9 L1066.3 480.8 L1062.2 480.7 L1058.0 480.4 L1053.8 480.1 L1049.7 479.7 L1045.5 479.3 L1041.4 478.8 L1037.2 478.2 L1033.2 477.5 L1029.1 476.8 L1025.1 476.0 L1021.2 475.1 L1017.3 474.2 L1013.5 473.2 L1009.8 472.2 L1006.2 471.1 L1002.7 469.9 L999.3 468.7 L996.0 467.5 L992.9 466.2 L989.9 464.9 L987.0 463.5 L984.2 462.1 L981.6 460.6 L979.2 459.1 L976.9 457.6 L974.8 456.1 L972.8 454.5 L971.0 453.0 L969.5 451.4 L968.0 449.8 L966.8 448.2 L965.8 446.6 L964.9 445.0 L964.2 443.4" fill="none" stroke="#1a0a30" stroke-width=".9"/><path d="M1040.500 322L1030.500 490L1033.500 484" fill="none" stroke="#000" stroke-width=".9"/><path d="M1039 333H1048.500L1041 478H1033Z" fill="#ff4040"/><path d="M1044 333L1037 478" stroke="#e23030" stroke-width="1"/><g transform="rotate(1.760 1060.500 304.500)"><path d="M959 304.500V318.500A101.500 17.700 0 0 0 1162 318.500V304.500Z" fill="url(#pg)"/><path d="M959 304.500V310.500A101.500 17.700 0 0 0 1162 310.500V304.500Z" fill="#1212ff"/><path d="M960 312.800A101.500 17.700 0 0 0 1161 312.800" fill="none" stroke="#1818f8" stroke-width="2.400" stroke-dasharray="4.500 4"/><ellipse cx="1060.500" cy="304.500" rx="101.500" ry="17.900" fill="#0000ff"/><ellipse cx="1060.500" cy="304.600" rx="99.800" ry="16.600" fill="#00008b"/></g><path d="M1040.500 322L1039.600 337" fill="none" stroke="#000" stroke-width=".9"/></g><path d="M88 202H135V218L133 220H88Z" fill="#c9ced6"/><path d="M125.1 204V219" stroke="#3c4047" stroke-width="1"/><path d="M126.6 209.5h6.600l-3.300 3.800z" fill="#33373d"/><path d="M651 202H742V218L740 220H651Z" fill="#c9ced6"/><path d="M732.3 204V219" stroke="#3c4047" stroke-width="1"/><path d="M733.8 209.5h6.600l-3.300 3.800z" fill="#33373d"/><path d="M88 500H143V516L141 518H88Z" fill="#c9ced6"/><path d="M133.5 502V517" stroke="#3c4047" stroke-width="1"/><path d="M135 507.5h6.600l-3.300 3.800z" fill="#33373d"/><path d="M651 500H705.2V516L703.2 518H651Z" fill="#8ba7c7"/><path d="M695.9 502V517" stroke="#000" stroke-width="1"/><path d="M697.4 507.5h6.600l-3.300 3.800z" fill="#000"/></svg>
<span class="t" style="left:95.00px;top:204.50px;font-size:12.40px;letter-spacing:-0.201px;font-weight:bold;color:#484d55;">Top</span>
<span class="t" style="left:658.00px;top:204.50px;font-size:12.40px;letter-spacing:-0.348px;font-weight:bold;color:#484d55;">Perspective</span>
<span class="t" style="left:95.20px;top:502.50px;font-size:12.40px;letter-spacing:-0.436px;font-weight:bold;color:#484d55;">Front</span>
<span class="t" style="left:658.30px;top:502.50px;font-size:12.40px;letter-spacing:-0.436px;font-weight:bold;color:#10141c;">Right</span>
<svg style="left:0;top:0" width="1440" height="900" viewBox="0 0 1440 900"><path d="M1215 204.500H1440M1215 206.500H1440" stroke="#cfd5e4"/><rect x="1214.500" y="253.500" width="1225" height="557" fill="#fff" stroke="#bcc6e0" transform="scale(1)" style="display:none"/><rect x="1214.500" y="253.500" width="224.500" height="557" fill="#fff" stroke="#bcc6e0"/><path d="M1384.2 229.500V212.500Q1384.2 209.500 1387.2 209.500H1402.7Q1405.7 209.500 1407.2 211.500L1419.2 229.500Z" fill="#dbdbde" stroke="#c3cbe0"/><path d="M1349.9 229.500V212.500Q1349.9 209.500 1352.9 209.500H1368.4Q1371.4 209.500 1372.9 211.500L1384.9 229.500Z" fill="#dbdbde" stroke="#c3cbe0"/><path d="M1316.1 229.500V212.500Q1316.1 209.500 1319.1 209.500H1334.6Q1337.6 209.500 1339.1 211.500L1351.1 229.500Z" fill="#dbdbde" stroke="#c3cbe0"/><path d="M1282.2 229.500V212.500Q1282.2 209.500 1285.2 209.500H1300.7Q1303.7 209.500 1305.2 211.500L1317.2 229.500Z" fill="#dbdbde" stroke="#c3cbe0"/><path d="M1215.5 229.500V212.500Q1215.5 209.500 1218.5 209.500H1234.0Q1237.0 209.500 1238.5 211.500L1250.5 229.500Z" fill="#dbdbde" stroke="#c3cbe0"/><path d="M1215 229.500H1440" stroke="#c3cbe0"/><path d="M1248.3 230.500V212.500Q1248.3 209.500 1251.3 209.500H1266.8Q1269.8 209.500 1271.3 211.500L1283.8 230.500Z" fill="#eaecf1" stroke="none"/><path d="M1248.3 229.500V212.500Q1248.3 209.500 1251.3 209.500H1266.8Q1269.8 209.500 1271.3 211.500L1283.3 229.500" fill="none" stroke="#c3cbe0"/><rect x="1215" y="230" width="224" height="23" fill="#f0f2f6"/><path d="M1294.5 254V278" stroke="#e4e6ec"/><path d="M1311.5 254V278" stroke="#e4e6ec"/><path d="M1328.5 254V278" stroke="#e4e6ec"/><path d="M1345.5 254V278" stroke="#e4e6ec"/><path d="M1362.5 254V278" stroke="#e4e6ec"/><rect x="1215" y="278" width="221" height="18.500" fill="#0a78d7"/><path d="M1215 296.500H1436" stroke="#fff" stroke-dasharray="1 1" /><path d="M1215 315.5H1436" stroke="#e6e6ea" stroke-dasharray="1 2"/><path d="M1215 334.5H1436" stroke="#e6e6ea" stroke-dasharray="1 2"/><path d="M1215 353.5H1436" stroke="#e6e6ea" stroke-dasharray="1 2"/><path d="M1215 372.5H1436" stroke="#e6e6ea" stroke-dasharray="1 2"/><path d="M1215 391.5H1436" stroke="#e6e6ea" stroke-dasharray="1 2"/><g transform="translate(1319 287)"><path d="M0 -6.500C-5 -6.500 -5 -1 -2 1.500L-1.500 4H1.500L2 1.500C5 -1 5 -6.500 0 -6.500Z" fill="#ffe97a" stroke="#7a5a00" stroke-width=".9"/><path d="M-1.500 5.500h3M-1 7h2" stroke="#555" stroke-width="1"/></g><g transform="translate(1336 287)"><path d="M0 -1V-4.500C0 -8 5.500 -8 5.500 -4.500V-3.500" fill="none" stroke="#222" stroke-width="1.300"/><rect x="-4.500" y="-1" width="8" height="7" fill="#ffe45e" stroke="#333" stroke-width="1"/></g><rect x="1348.500" y="281.5" width="11" height="11" fill="#000000" stroke="#000"/><circle cx="1372.500" cy="287" r="7" fill="#ffffff" stroke="#ffffff" stroke-width=".8"/><g transform="translate(1319 306)"><path d="M0 -6.500C-5 -6.500 -5 -1 -2 1.500L-1.500 4H1.500L2 1.500C5 -1 5 -6.500 0 -6.500Z" fill="#ffe97a" stroke="#7a5a00" stroke-width=".9"/><path d="M-1.500 5.500h3M-1 7h2" stroke="#555" stroke-width="1"/></g><g transform="translate(1336 306)"><path d="M0 -1V-4.500C0 -8 5.500 -8 5.500 -4.500V-3.500" fill="none" stroke="#222" stroke-width="1.300"/><rect x="-4.500" y="-1" width="8" height="7" fill="#ffe45e" stroke="#333" stroke-width="1"/></g><rect x="1348.500" y="300.5" width="11" height="11" fill="#ff4040" stroke="#000"/><circle cx="1372.500" cy="306" r="7" fill="#c84040" stroke="#222" stroke-width=".8"/><g transform="translate(1319 325)"><path d="M0 -6.500C-5 -6.500 -5 -1 -2 1.500L-1.500 4H1.500L2 1.500C5 -1 5 -6.500 0 -6.500Z" fill="#ffe97a" stroke="#7a5a00" stroke-width=".9"/><path d="M-1.500 5.500h3M-1 7h2" stroke="#555" stroke-width="1"/></g><g transform="translate(1336 325)"><path d="M0 -1V-4.500C0 -8 5.500 -8 5.500 -4.500V-3.500" fill="none" stroke="#222" stroke-width="1.300"/><rect x="-4.500" y="-1" width="8" height="7" fill="#ffe45e" stroke="#333" stroke-width="1"/></g><rect x="1348.500" y="319.5" width="11" height="11" fill="#8a2be2" stroke="#000"/><circle cx="1372.500" cy="325" r="7" fill="#551a99" stroke="#222" stroke-width=".8"/><rect x="1348.500" y="338.5" width="11" height="11" fill="#0000ff" stroke="#000"/><circle cx="1372.500" cy="344" r="7" fill="#0000ff" stroke="#222" stroke-width=".8"/><g transform="translate(1319 363)"><path d="M0 -6.500C-5 -6.500 -5 -1 -2 1.500L-1.500 4H1.500L2 1.500C5 -1 5 -6.500 0 -6.500Z" fill="#ffe97a" stroke="#7a5a00" stroke-width=".9"/><path d="M-1.500 5.500h3M-1 7h2" stroke="#555" stroke-width="1"/></g><g transform="translate(1336 363)"><path d="M0 -1V-4.500C0 -8 5.500 -8 5.500 -4.500V-3.500" fill="none" stroke="#222" stroke-width="1.300"/><rect x="-4.500" y="-1" width="8" height="7" fill="#ffe45e" stroke="#333" stroke-width="1"/></g><rect x="1348.500" y="357.5" width="11" height="11" fill="#008000" stroke="#000"/><circle cx="1372.500" cy="363" r="7" fill="#fafafa" stroke="#eeeeee" stroke-width=".8"/><g transform="translate(1319 382)"><path d="M0 -6.500C-5 -6.500 -5 -1 -2 1.500L-1.500 4H1.500L2 1.500C5 -1 5 -6.500 0 -6.500Z" fill="#ffe97a" stroke="#7a5a00" stroke-width=".9"/><path d="M-1.500 5.500h3M-1 7h2" stroke="#555" stroke-width="1"/></g><g transform="translate(1336 382)"><path d="M0 -1V-4.500C0 -8 5.500 -8 5.500 -4.500V-3.500" fill="none" stroke="#222" stroke-width="1.300"/><rect x="-4.500" y="-1" width="8" height="7" fill="#ffe45e" stroke="#333" stroke-width="1"/></g><rect x="1348.500" y="376.5" width="11" height="11" fill="#ffffff" stroke="#000"/><circle cx="1372.500" cy="382" r="7" fill="#fafafa" stroke="#eeeeee" stroke-width=".8"/><path d="M1297.500 344.500l3.500 3.500 7.500-8.500" fill="none" stroke="#111" stroke-width="1.500"/><rect x="1215" y="794" width="223.500" height="16" fill="#f0f0f0"/><rect x="1232" y="794" width="102" height="16" fill="#c9c9c9"/><path d="M1225.500 797.500l-4 4 4 4M1425.500 797.500l4 4-4 4" fill="none" stroke="#444" stroke-width="1.800"/></svg>
<span class="t" style="left:1221.00px;top:259.80px;font-size:12.40px;letter-spacing:-0.269px;">Name</span>
<span class="t" style="left:1369.30px;top:259.80px;font-size:12.40px;letter-spacing:-0.238px;">Material</span>
<span class="t" style="left:1223.30px;top:281.90px;font-size:12.40px;letter-spacing:-0.313px;color:#fff;">Default</span>
<span class="t" style="left:1223.30px;top:300.90px;font-size:12.40px;letter-spacing:-0.820px;">Layer 01</span>
<span class="t" style="left:1223.30px;top:319.90px;font-size:12.40px;letter-spacing:-0.820px;">Layer 02</span>
<span class="t" style="left:1223.30px;top:338.90px;font-size:12.40px;letter-spacing:-0.541px;font-weight:bold;">Layer 03</span>
<span class="t" style="left:1223.30px;top:357.90px;font-size:12.40px;letter-spacing:-0.820px;">Layer 04</span>
<span class="t" style="left:1223.30px;top:376.90px;font-size:12.40px;letter-spacing:-0.820px;">Layer 05</span>
<span class="t" style="left:1385.50px;top:300.90px;font-size:12.40px;letter-spacing:-0.656px;">Plaster</span>
<span class="t" style="left:1385.50px;top:319.90px;font-size:12.40px;letter-spacing:-0.654px;">Plaster (1)</span>
<div class="a" style="left:1385px;top:335px;width:51px;height:18px;overflow:hidden"><span class="t" style="left:0.50px;top:3.70px;font-size:12.40px;letter-spacing:-0.178px;font-weight:bold;">Plaster (2)</span></div>
<svg style="left:0;top:0" width="1440" height="900" viewBox="0 0 1440 900"><defs><linearGradient id="rdg" x1="0" y1="0" x2="1" y2="1"><stop offset="0" stop-color="#ffffff"/><stop offset="1" stop-color="#d4d4d4"/></linearGradient>
<radialGradient id="rsb" cx=".35" cy=".3" r=".75"><stop offset="0" stop-color="#9ac0ff"/><stop offset=".45" stop-color="#1a50d0"/><stop offset="1" stop-color="#001060"/></radialGradient>
<linearGradient id="rfy" x1="0" y1="0" x2="0" y2="1"><stop offset="0" stop-color="#fff0a0"/><stop offset="1" stop-color="#f0b400"/></linearGradient>
<linearGradient id="rbl" x1="0" y1="0" x2="1" y2="1"><stop offset="0" stop-color="#9ab0ff"/><stop offset="1" stop-color="#2a48d0"/></linearGradient></defs><path d="M1225.16 215.91A5.6 5.6 0 0 1 1228.84 215.91" stroke="#ff0000" stroke-width="2.8" fill="none"/><path d="M1228.62 215.84A5.6 5.6 0 0 1 1231.60 218.00" stroke="#ff8000" stroke-width="2.8" fill="none"/><path d="M1231.46 217.82A5.6 5.6 0 0 1 1232.60 221.31" stroke="#ffee00" stroke-width="2.8" fill="none"/><path d="M1232.60 221.09A5.6 5.6 0 0 1 1231.46 224.58" stroke="#60e000" stroke-width="2.8" fill="none"/><path d="M1231.60 224.40A5.6 5.6 0 0 1 1228.62 226.56" stroke="#00c060" stroke-width="2.8" fill="none"/><path d="M1228.84 226.49A5.6 5.6 0 0 1 1225.16 226.49" stroke="#00c8d0" stroke-width="2.8" fill="none"/><path d="M1225.38 226.56A5.6 5.6 0 0 1 1222.40 224.40" stroke="#0070ff" stroke-width="2.8" fill="none"/><path d="M1222.54 224.58A5.6 5.6 0 0 1 1221.40 221.09" stroke="#3020e0" stroke-width="2.8" fill="none"/><path d="M1221.40 221.31A5.6 5.6 0 0 1 1222.54 217.82" stroke="#9000d0" stroke-width="2.8" fill="none"/><path d="M1222.40 218.00A5.6 5.6 0 0 1 1225.38 215.84" stroke="#e000a0" stroke-width="2.8" fill="none"/><circle cx="1227" cy="221.2" r="7" fill="none" stroke="#222" stroke-width=".7"/><circle cx="1227" cy="221.2" r="4.2" fill="none" stroke="#222" stroke-width=".7"/><g transform="translate(1259.5 221)"><g transform="scale(.85)"><path d="M-8.500 -9L9 -5.500V2L0.500 9.500L-7.500 3Z" fill="#1a2a9a"/><path d="M-8.100 -4.200L-0.700 4.100L9 -2.500V-0.600L-0.200 6.350L-7.850 -1.200Z" fill="#fff"/><path d="M-8.500 -9L-1.500 0.500L-0.700 4.100L-8.100 -4.200Z" fill="#e03a08"/><path d="M-1.500 0.500L9 -5.500V-2.500L-0.700 4.100Z" fill="#c83000"/><path d="M-8.500 -9L9 -5.500L-1.500 0.500Z" fill="#ff5a14"/><path d="M-8.500 -9L9 -5.500V2L0.500 9.500L-7.500 3Z" fill="none" stroke="#111" stroke-width="1"/></g></g><g transform="translate(1293 221.5)"><circle r="7" fill="url(#rsb)"/><ellipse cx="-2.500" cy="-3" rx="2.200" ry="1.500" fill="#fff" opacity=".7"/><path d="M1 -7L5 -10.500H8.500V-7H5L3 -5Z" fill="#fff" stroke="#222" stroke-width=".7"/><rect x="8" y="-11" width="2" height="5" fill="#111"/></g><g transform="translate(1328 221)"><g transform="rotate(-50)"><rect x="-9" y="-2.500" width="8" height="5" fill="#fff" stroke="#555" stroke-width=".7"/><rect x="-1" y="-2.500" width="5" height="5" fill="#e85a20" stroke="#7a2a00" stroke-width=".6"/><path d="M4 -2.500L8 -1.500V1.500L4 2.500Z" fill="#c8a070" stroke="#555" stroke-width=".6"/><path d="M8 -1L10.500 0L8 1Z" fill="#333"/></g></g><g transform="translate(1362 221)"><path d="M-7 4.500V-4.500H-2.500L-1 -2.500H4.500V-0.500" fill="#f7d24a" stroke="#7a5a00" stroke-width=".8"/><path d="M-7 4.500L-4 -0.500H7.500L4.500 4.500Z" fill="url(#rfy)" stroke="#7a5a00" stroke-width=".8" stroke-linejoin="round"/></g><g transform="translate(1396 220.5)"><rect x="-7" y="-6.500" width="14" height="13.500" fill="#3a58d8" stroke="#333" stroke-width=".9"/><rect x="-7" y="-6.500" width="14" height="3" fill="#e8e8f4" stroke="#333" stroke-width=".7"/><ellipse cx="0" cy="2" rx="4" ry="3.500" fill="#8aa0f0"/><text x="0" y="5.500" font-size="9" font-weight="bold" text-anchor="middle" fill="#fff" font-family="Liberation Serif,serif">?</text></g><path d="M1438.5 221.2 L1438.1 223.3 L1435.8 223.1 L1435.0 224.3 L1436.0 226.4 L1434.3 227.6 L1432.7 225.8 L1431.3 226.1 L1430.6 228.3 L1428.5 227.9 L1428.7 225.6 L1427.5 224.8 L1425.4 225.8 L1424.2 224.1 L1426.0 222.5 L1425.7 221.1 L1423.5 220.4 L1423.9 218.3 L1426.2 218.5 L1427.0 217.3 L1426.0 215.2 L1427.7 214.0 L1429.3 215.8 L1430.7 215.5 L1431.4 213.3 L1433.5 213.7 L1433.3 216.0 L1434.5 216.8 L1436.6 215.8 L1437.8 217.5 L1436.0 219.1 L1436.3 220.5 Z" fill="#c6c6c8"/><circle cx="1431" cy="220.800" r="2.500" fill="#eaecf1"/><g transform="translate(1227.5 241)"><path d="M-5 -6.500H1.500L5 -3V6.500H-5Z" fill="url(#rdg)" stroke="#111" stroke-width="1.100" stroke-linejoin="round"/><path d="M1.500 -6.500V-3H5" fill="none" stroke="#111" stroke-width=".7"/></g><g transform="translate(1251.5 241)"><path d="M-6 -6.500H-1L1.500 -4V2.500H-6Z" fill="url(#rdg)" stroke="#111" stroke-width="1"/><path d="M-2 -2.500H3.500L6 0V6.500H-2Z" fill="url(#rdg)" stroke="#111" stroke-width="1"/></g><g transform="translate(1276 241.3)"><path d="M-6 -5.500L6 5.500M6 -5.500L-6 5.500" stroke="#c40000" stroke-width="2.600" stroke-linecap="round"/></g><path d="M1294.500 243.700L1301.200 235.900L1308 243.700Z" fill="#bdbdbd"/><path d="M1317.800 236.600H1332.200L1325 245.200Z" fill="#7a8af0" stroke="#2a2a90" stroke-width=".9" stroke-linejoin="round"/><path d="M1353.800 234.700V247.800L1345 241.200Z" fill="#b0b0b0"/><g transform="translate(1373.5 241)"><path d="M-6.500 -6.500H6.500L1.500 0V6L-1.500 4.500V0Z" fill="url(#rbl)" stroke="#1a2a8a" stroke-width=".8" stroke-linejoin="round"/><ellipse cx="0" cy="-6" rx="6.500" ry="1.300" fill="#c8d4ff" stroke="#1a2a8a" stroke-width=".6"/></g><path d="M1382 244v4h-4z" fill="#333"/><g transform="translate(1399 241)"><path d="M-6 -6.500H1.500L5.500 -2.500V6.500H-6Z" fill="#cfcfcf" stroke="#b4b4b4" stroke-width="1"/></g><path d="M1407 244v4h-4z" fill="#aaa"/><g transform="translate(1423 241)"><path d="M-7 5L0.500 -2.500L2.500 -0.500L-5 7Z" fill="#2a3a9a" stroke="#111" stroke-width=".7"/><path d="M-2.500 -5.500C0 -8 4 -7.500 7 -3L5.500 -1.500L3.500 -3.500L1.500 -1.500L-1 -4Z" fill="#666" stroke="#111" stroke-width=".8"/></g><path d="M1431 244v4h-4z" fill="#333"/></svg>
<svg style="left:0;top:0" width="1440" height="900" viewBox="0 0 1440 900"><path d="M280 794.500L288 811.500H305Q308 811.500 308 808.500V794.500" fill="#eaecf1" stroke="#c3cbe0"/><path d="M295 800.500h2v2.500h2.500v2h-2.500v2.500h-2v-2.500h-2.500v-2h2.500z" fill="none" stroke="#555" stroke-width=".8"/><path d="M196.5 794L204.5 811.500H237.0Q240.0 811.500 240.0 808.500V794" fill="#dadadd" stroke="#c3cbe0"/><path d="M161.0 794L169.0 811.500H192.0Q195.0 811.500 195.0 808.500V794" fill="#dadadd" stroke="#c3cbe0"/><path d="M87.500 794V803.500L94 811.500H158.7Q161.7 811.500 161.7 808.500V794" fill="#dadadd" stroke="#c3cbe0"/><path d="M232.0 794L240.0 811.500H278.5Q281.5 811.500 281.5 808.500V794Z" fill="#eaecf1" stroke="none"/><path d="M232.0 794.500L240.0 811.500H278.5Q281.5 811.500 281.5 808.500V794.500" fill="none" stroke="#c3cbe0"/><rect x="10.5" y="823.500" width="12" height="12" fill="#fff" stroke="#333"/><path d="M12.5 829.500l2.800 3 5.200-6.500" fill="none" stroke="#222" stroke-width="1.200"/><rect x="53.5" y="823.500" width="12" height="12" fill="#fff" stroke="#333"/><path d="M55.5 829.500l2.800 3 5.200-6.500" fill="none" stroke="#222" stroke-width="1.200"/><rect x="100.5" y="823.500" width="12" height="12" fill="#fff" stroke="#333"/><path d="M102.5 829.500l2.800 3 5.200-6.500" fill="none" stroke="#222" stroke-width="1.200"/><rect x="151.5" y="823.500" width="12" height="12" fill="#fff" stroke="#333"/><path d="M153.5 829.500l2.800 3 5.200-6.500" fill="none" stroke="#222" stroke-width="1.200"/><rect x="195.5" y="823.500" width="12" height="12" fill="#fff" stroke="#333"/><path d="M197.5 829.500l2.800 3 5.200-6.500" fill="none" stroke="#222" stroke-width="1.200"/><rect x="239.5" y="823.500" width="12" height="12" fill="#fff" stroke="#333"/><path d="M241.5 829.500l2.800 3 5.200-6.500" fill="none" stroke="#222" stroke-width="1.200"/><rect x="276.5" y="823.500" width="12" height="12" fill="#fff" stroke="#333"/><path d="M278.5 829.500l2.800 3 5.200-6.500" fill="none" stroke="#222" stroke-width="1.200"/><rect x="323.5" y="823.500" width="12" height="12" fill="#fff" stroke="#333"/><path d="M325.5 829.500l2.800 3 5.200-6.500" fill="none" stroke="#222" stroke-width="1.200"/><rect x="365.5" y="823.500" width="12" height="12" fill="#fff" stroke="#333"/><path d="M367.5 829.500l2.800 3 5.200-6.500" fill="none" stroke="#222" stroke-width="1.200"/><rect x="417.5" y="823.500" width="12" height="12" fill="#fff" stroke="#333"/><path d="M419.5 829.500l2.800 3 5.200-6.500" fill="none" stroke="#222" stroke-width="1.200"/><rect x="465.5" y="823.500" width="12" height="12" fill="#fff" stroke="#333"/><path d="M467.5 829.500l2.800 3 5.200-6.500" fill="none" stroke="#222" stroke-width="1.200"/><rect x="522.5" y="824.500" width="10" height="10" fill="#e6e6e6" stroke="#bcbcbc"/><rect x="590.5" y="824.500" width="10" height="10" fill="#e6e6e6" stroke="#bcbcbc"/><path d="M0 840.500H1440" stroke="#c3cbe0"/><path d="M49.5 841V860" stroke="#c3cbe0"/><path d="M137.5 841V860" stroke="#c3cbe0"/><path d="M225.5 841V860" stroke="#c3cbe0"/><path d="M313.5 841V860" stroke="#c3cbe0"/><path d="M401.5 841V860" stroke="#c3cbe0"/><path d="M570.5 841V860" stroke="#c3cbe0"/><path d="M634.5 841V860" stroke="#c3cbe0"/><path d="M679.5 841V860" stroke="#c3cbe0"/><path d="M726.5 841V860" stroke="#c3cbe0"/><path d="M774.5 841V860" stroke="#c3cbe0"/><path d="M847.5 841V860" stroke="#c3cbe0"/><path d="M906.5 841V860" stroke="#c3cbe0"/><path d="M998.5 841V860" stroke="#c3cbe0"/><path d="M1038.5 841V860" stroke="#c3cbe0"/><path d="M1432.5 841V860" stroke="#c3cbe0"/><rect x="727" y="841" width="47" height="19" fill="#e4eefb"/><rect x="775" y="841" width="72" height="19" fill="#e4eefb"/><rect x="848" y="841" width="58" height="19" fill="#e4eefb"/><rect x="404.500" y="844.500" width="13" height="12" fill="#0000ff" stroke="#000"/></svg>
<span class="t" style="left:97.30px;top:797.50px;font-size:12.40px;letter-spacing:-0.508px;">Perspective</span>
<span class="t" style="left:171.00px;top:797.50px;font-size:12.40px;letter-spacing:-0.198px;">Top</span>
<span class="t" style="left:206.50px;top:797.50px;font-size:12.40px;letter-spacing:-0.288px;">Front</span>
<span class="t" style="left:249.00px;top:797.50px;font-size:12.40px;letter-spacing:-0.190px;">Right</span>
<span class="t" style="left:25.00px;top:823.80px;font-size:12.40px;letter-spacing:-0.688px;">End</span>
<span class="t" style="left:68.00px;top:823.80px;font-size:12.40px;letter-spacing:-0.469px;">Near</span>
<span class="t" style="left:116.50px;top:823.80px;font-size:12.40px;letter-spacing:-0.253px;">Point</span>
<span class="t" style="left:167.50px;top:823.80px;font-size:12.40px;letter-spacing:0.073px;">Mid</span>
<span class="t" style="left:211.00px;top:823.80px;font-size:12.40px;letter-spacing:-0.916px;">Cen</span>
<span class="t" style="left:255.50px;top:823.80px;font-size:12.40px;letter-spacing:-0.262px;">Int</span>
<span class="t" style="left:292.50px;top:823.80px;font-size:12.40px;letter-spacing:-0.799px;">Perp</span>
<span class="t" style="left:339.40px;top:823.80px;font-size:12.40px;letter-spacing:-0.798px;">Tan</span>
<span class="t" style="left:381.00px;top:823.80px;font-size:12.40px;letter-spacing:-0.334px;">Quad</span>
<span class="t" style="left:433.00px;top:823.80px;font-size:12.40px;letter-spacing:-0.127px;">Knot</span>
<span class="t" style="left:481.00px;top:823.80px;font-size:12.40px;letter-spacing:-0.526px;">Vertex</span>
<span class="t" style="left:537.00px;top:823.80px;font-size:12.40px;letter-spacing:-0.228px;">Project</span>
<span class="t" style="left:605.00px;top:823.80px;font-size:12.40px;letter-spacing:-0.479px;">Disable</span>
<span class="t" style="left:6.00px;top:844.90px;font-size:12.40px;letter-spacing:-0.612px;">CPlane</span>
<span class="t" style="left:73.00px;top:844.90px;font-size:12.40px;letter-spacing:-0.697px;">x 82.538</span>
<span class="t" style="left:161.00px;top:844.90px;font-size:12.40px;letter-spacing:-0.697px;">y 37.600</span>
<span class="t" style="left:252.00px;top:844.90px;font-size:12.40px;letter-spacing:-0.811px;">z 0.000</span>
<span class="t" style="left:340.00px;top:844.90px;font-size:12.40px;letter-spacing:-0.316px;">Meters</span>
<span class="t" style="left:421.50px;top:844.90px;font-size:12.40px;letter-spacing:-0.720px;">Layer 03</span>
<span class="t" style="left:577.50px;top:844.90px;font-size:12.40px;letter-spacing:-0.626px;">Grid Snap</span>
<span class="t" style="left:642.50px;top:844.90px;font-size:12.40px;letter-spacing:-0.223px;">Ortho</span>
<span class="t" style="left:687.20px;top:844.90px;font-size:12.40px;letter-spacing:-0.558px;">Planar</span>
<span class="t" style="left:734.00px;top:844.90px;font-size:12.40px;letter-spacing:-0.917px;font-weight:bold;">Osnap</span>
<span class="t" style="left:779.00px;top:844.90px;font-size:12.40px;letter-spacing:-0.355px;font-weight:bold;">SmartTrack</span>
<span class="t" style="left:854.00px;top:844.90px;font-size:12.40px;letter-spacing:-0.515px;font-weight:bold;">Gumball</span>
<span class="t" style="left:914.00px;top:844.90px;font-size:12.40px;letter-spacing:-0.321px;">Record History</span>
<span class="t" style="left:1006.00px;top:844.90px;font-size:12.40px;letter-spacing:-0.259px;">Filter</span>
<span class="t" style="left:1040.50px;top:844.90px;font-size:12.40px;letter-spacing:-0.436px;">Memory use: 526 MB</span>
<span class="t" style="left:1144.00px;top:777.25px;font-size:20.50px;letter-spacing:-0.386px;color:rgba(185,185,185,.8);">Activate Windows</span>
<span class="t" style="left:1144.00px;top:802.67px;font-size:14.80px;letter-spacing:0.031px;color:rgba(180,180,180,.85);">Go to Settings to activate Windows.</span>
<div class="a" style="left:0;top:860px;width:1440px;height:40px;background:linear-gradient(90deg,#20363f 0%,#1f3440 45%,#1c2a42 70%,#1a2440 100%)"></div>
<div class="a" style="left:0;top:860px;width:48px;height:40px;background:#1d333b"></div>
<div class="a" style="left:48px;top:860px;width:343px;height:40px;background:#f2f2f2;border:1px solid #e0e0e0;border-bottom:1px solid #c8c8c8"></div>
<div class="a" style="left:834px;top:860px;width:48px;height:40px;background:#4c5d6a"></div>
<div class="a" style="left:545px;top:898px;width:38px;height:2px;background:#7fb6e6"></div>
<div class="a" style="left:834px;top:898px;width:48px;height:2px;background:#76b9ed"></div>
<div class="a" style="left:1434px;top:860px;width:1px;height:40px;background:#5a6270"></div>
<span class="t" style="left:88.00px;top:873.30px;font-size:15.00px;letter-spacing:-0.241px;color:#3c3c3c;">Type here to search</span>
<span class="t" style="left:1101.40px;top:874.15px;font-size:14.00px;letter-spacing:-0.781px;color:#fff;">28°F</span>
<span class="t" style="left:1137.30px;top:874.15px;font-size:14.00px;letter-spacing:-0.147px;color:#fff;">Cloudy</span>
<span class="t" style="left:1293.60px;top:873.34px;font-size:12.00px;letter-spacing:-1.335px;color:#fff;">ENG</span>
<span class="t" style="left:1333.00px;top:864.64px;font-size:12.00px;letter-spacing:-0.147px;color:#fff;">8:58 AM</span>
<span class="t" style="left:1326.60px;top:883.14px;font-size:12.00px;letter-spacing:-0.336px;color:#fff;">12/15/2021</span>
<svg style="left:0;top:860px" width="1440" height="40" viewBox="0 860 1440 40"><defs><linearGradient id="eg" x1="0" y1="0" x2="1" y2="1"><stop offset="0" stop-color="#35c1f1"/><stop offset=".5" stop-color="#1a7fd4"/><stop offset="1" stop-color="#0c59a4"/></linearGradient>
<linearGradient id="eg2" x1="0" y1="1" x2="1" y2="0"><stop offset="0" stop-color="#1a9fd8"/><stop offset=".6" stop-color="#4cd080"/><stop offset="1" stop-color="#7de058"/></linearGradient>
<linearGradient id="cl" x1="0" y1="0" x2="0" y2="1"><stop offset="0" stop-color="#ffffff"/><stop offset="1" stop-color="#b8d8f4"/></linearGradient></defs><path d="M16 874.300l6.500-.9v6.200H16zM23.300 873.300l8.700-1.300v7.600h-8.700zM16 880.400h6.500v6.200l-6.500-.9zM23.300 880.400H32V888l-8.700-1.300z" fill="#fff"/><circle cx="72" cy="877.500" r="5" stroke="#222" stroke-width="1.300" fill="none"/><path d="M68.500 881.500L61.500 889" stroke="#222" stroke-width="1.300"/><circle cx="415.500" cy="880" r="6.800" stroke="#fff" fill="none" stroke-width="1.800"/><path d="M457.500 874.500H468.500V885.500H457.500Z" stroke="#fff" fill="none" stroke-width="1.200"/><path d="M456 871.500H467M456 888.500H467" stroke="#fff" fill="none" stroke-width="1.200"/><path d="M471 872V875M471 880V889" stroke="#fff" fill="none" stroke-width="1.400"/><rect x="469.800" y="876.500" width="2.400" height="2.400" fill="#fff"/><g transform="translate(515 880)"><circle r="11.500" fill="url(#eg)"/><path d="M-11 2C-12 -8 -4 -12 1 -11.500C8 -11 12 -6 11.500 -1C11 3 7 4 4 3C2 2.500 2.500 0 3 -1C3.500 -4 0 -6 -3 -5C-8 -4 -10 0 -11 2Z" fill="url(#eg2)"/><path d="M-3 -5C-7 -2 -6 5 -1 8C3 10 8 9 10 6C6 8 1 7 -1 3C-2 0 -1 -3 -3 -5Z" fill="#0c4a94" opacity=".85"/><path d="M-2.500 1.500C-1 6 5 7.500 9 5" stroke="#eaf6ff" stroke-width="1" fill="none" opacity=".3"/></g><g transform="translate(563.500 880)"><path d="M-11 -8.500H-4L-2.500 -7H10.500V8H-11Z" fill="#e8a820"/><path d="M-11 -6H10.500V8H-11Z" fill="#ffd75e"/><path d="M-11 -6H10.500V-4.500H-11Z" fill="#fff0a8" opacity=".6"/><path d="M-6.500 2H6.500V9.500H3V5.500H-3V9.500H-6.500Z" fill="#3a8ee0"/><path d="M-6.500 2H6.500V3.500H-6.500Z" fill="#5aa8f0"/></g><g transform="translate(612.500 881)"><path d="M-5.500 -8.500V-10.500C-5.500 -12 -4.500 -12.500 -3.500 -12.500H3.500C4.500 -12.500 5.500 -12 5.500 -10.500V-8.500" stroke="#38a8f0" stroke-width="1.600" fill="none"/><rect x="-11.500" y="-8.500" width="23" height="19.500" rx="3" fill="#f7f7f7"/><rect x="-4.500" y="-4" width="4" height="4" fill="#f25022"/><rect x="0.500" y="-4" width="4" height="4" fill="#7fba00"/><rect x="-4.500" y="1" width="4" height="4" fill="#00a4ef"/><rect x="0.500" y="1" width="4" height="4" fill="#ffb900"/></g><g transform="translate(662 880)"><path d="M-12 -4L0 -11.500L12 -4V11H-12Z" fill="#1a78d0"/><path d="M-10 -3.500H10V5H-10Z" fill="#f4f8fc"/><path d="M-12 -4L0 4.500L12 -4V11H-12Z" fill="#2a98e8"/><path d="M-12 11L0 2.500L12 11Z" fill="#48b4f4"/></g><g transform="translate(711 880)"><rect x="-12" y="-12" width="24" height="24" fill="#f6eceb"/><path d="M-8 9.500L-1.500 -9.500H2.500L8.500 9.500H4.500L3 5H-3.500L-4.500 9.500ZM-2.500 1.500H2L0 -5Z" fill="#c8202c"/><path d="M-8 9.500L-1.500 -9.500H0L-5.500 9.500Z" fill="#8a1018" opacity=".6"/></g><path d="M752 869.500H763L767.500 874V890H752Z" fill="#f4f4f4"/><path d="M763 869.500V874H767.500Z" fill="#c8c8c8"/><g transform="translate(846 868)"><rect x="0" y="0" width="24" height="24" fill="#161616"/><path d="M0 0H8.500L11 6.500L13.500 10.500L16 12.500L18.500 11.500L24 10.300V12.300L18 19L16.500 23L14.500 23.500L8 17.500L3 15L0 12Z" fill="#fff"/><path d="M5 0Q4.500 5.500 2 9" stroke="#161616" stroke-width="1.300" fill="none"/><path d="M6 11.500L10 9.500M5.500 12L7 16L8.500 14L9.500 16.500L12 14M16.500 13L18.500 11.500" stroke="#222" stroke-width="1" fill="none"/></g><g transform="translate(1081 880)"><path d="M-7 7C-12 7 -12.500 0.500 -8 -0.500C-8 -6 -1 -9 2.500 -4.500C7 -6.500 11.500 -2 9.500 1.500C13 3 11 7 8 7Z" fill="url(#cl)"/></g><path d="M1197.500 884l5.500-5.500 5.500 5.500" stroke="#fff" fill="none" stroke-width="1.300"/><rect x="1222.500" y="876.500" width="7" height="8" rx="1" stroke="#fff" fill="none" stroke-width="1.100"/><path d="M1229.500 879.500l3.500-2v6l-3.500-2" stroke="#fff" fill="none" stroke-width="1.100"/><path d="M1223 874c1-2 5-2 6 0M1223 887c1 2 5 2 6 0" stroke="#fff" fill="none" stroke-width="1"/><g transform="translate(1257 886.500)"><circle r="1.300" fill="#fff"/><path d="M-3.800 0A3.800 3.800 0 0 1 0 -3.800M-7 0A7 7 0 0 1 0 -7" stroke="#fff" fill="none" stroke-width="1.200"/><path d="M-10.200 0A10.200 10.200 0 0 1 0 -10.200" stroke="#8a93a3" fill="none" stroke-width="1.200"/></g><path d="M1267 878H1270L1274 874.500V886.500L1270 883H1267Z" stroke="#fff" fill="none" stroke-width="1.100" stroke-linejoin="round"/><path d="M1276.500 878a3.500 3.500 0 0 1 0 5M1279 876a6.500 6.500 0 0 1 0 9M1281.500 874a9.500 9.500 0 0 1 0 13" stroke="#fff" fill="none" stroke-width="1"/><path d="M1399.500 872.500H1414.500V884.500H1410.500V888L1407 884.500H1399.500Z" stroke="#fff" fill="none" stroke-width="1.200" stroke-linejoin="round"/><text x="799" y="881" font-size="13" font-style="italic" font-weight="bold" fill="#20e020" font-family="Liberation Serif,serif" textLength="21">IPT</text><text x="805.500" y="891.500" font-size="9.500" font-weight="bold" fill="#2a8af0" font-family="Liberation Sans,sans-serif">5</text><text x="862.500" y="878.500" font-size="11" fill="#fff" font-family="Liberation Sans,sans-serif">6</text></svg>
</body></html>
